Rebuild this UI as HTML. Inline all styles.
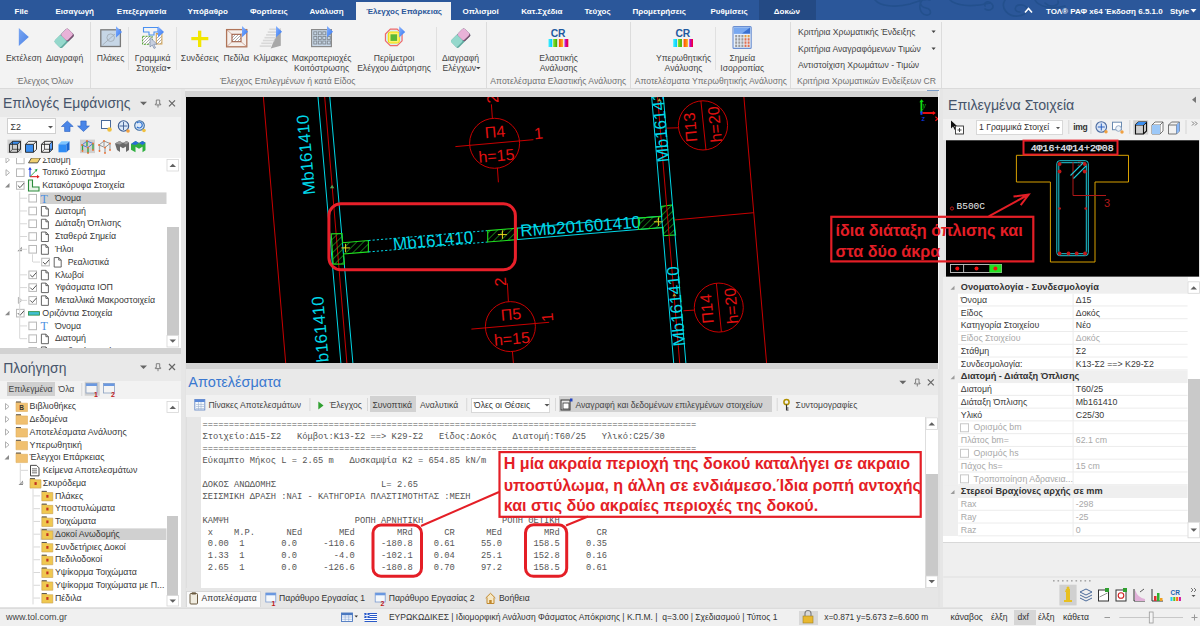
<!DOCTYPE html>
<html><head><meta charset="utf-8"><style>
html,body{margin:0;padding:0;width:1200px;height:626px;overflow:hidden;background:#e3e3e3;font-family:"Liberation Sans",sans-serif}
.t{position:absolute;white-space:pre;line-height:1}
.r{position:absolute;display:block}
</style></head><body>
<div class="r" style="left:0px;top:0px;width:1200px;height:20px;background:#2b579a;"></div>
<svg class="r" style="left:840px;top:0px;" width="240" height="20" viewBox="0 0 240 20"><g fill="none" stroke="#23508d" stroke-width="1.6" stroke-linecap="round"><path d="M35 0 C40 6 55 8 70 4 C80 1 85 -2 90 0"/><path d="M82 0 C78 6 80 14 86 15 C92 16 92 9 86 8 C80 7 78 0 84 -2"/><path d="M110 0 C115 5 130 8 150 3"/><path d="M145 9 C150 12 155 8 152 4 C149 0 143 2 145 6"/><path d="M165 0 C160 8 168 17 178 16 C188 15 190 6 182 5 C174 4 173 12 180 12"/><path d="M195 0 C198 6 210 10 225 6"/><path d="M205 3 C210 8 220 6 218 1"/></g></svg>
<div class="r" style="left:758.75px;top:0px;width:57.5px;height:20px;background:#244a84;"></div>
<div class="r" style="left:355.5px;top:2px;width:95px;height:18px;background:#f3f3f3;"></div>
<div class="t" style="left:14.5px;top:7.8px;font-size:8px;color:#fff;font-weight:bold;font-family:'Liberation Sans';">File</div>
<div class="t" style="left:55.5px;top:7.8px;font-size:8px;color:#fff;font-weight:bold;font-family:'Liberation Sans';">Εισαγωγή</div>
<div class="t" style="left:116.8px;top:7.8px;font-size:8px;color:#fff;font-weight:bold;font-family:'Liberation Sans';">Επεξεργασία</div>
<div class="t" style="left:187.5px;top:7.8px;font-size:8px;color:#fff;font-weight:bold;font-family:'Liberation Sans';">Υπόβαθρο</div>
<div class="t" style="left:250.0px;top:7.8px;font-size:8px;color:#fff;font-weight:bold;font-family:'Liberation Sans';">Φορτίσεις</div>
<div class="t" style="left:309.5px;top:7.8px;font-size:8px;color:#fff;font-weight:bold;font-family:'Liberation Sans';">Ανάλυση</div>
<div class="t" style="left:462.5px;top:7.8px;font-size:8px;color:#fff;font-weight:bold;font-family:'Liberation Sans';">Οπλισμοί</div>
<div class="t" style="left:521.2px;top:7.8px;font-size:8px;color:#fff;font-weight:bold;font-family:'Liberation Sans';">Κατ.Σχέδια</div>
<div class="t" style="left:584.5px;top:7.8px;font-size:8px;color:#fff;font-weight:bold;font-family:'Liberation Sans';">Τεύχος</div>
<div class="t" style="left:632.5px;top:7.8px;font-size:8px;color:#fff;font-weight:bold;font-family:'Liberation Sans';">Προμετρήσεις</div>
<div class="t" style="left:710.5px;top:7.8px;font-size:8px;color:#fff;font-weight:bold;font-family:'Liberation Sans';">Ρυθμίσεις</div>
<div class="t" style="left:773.8px;top:7.8px;font-size:8px;color:#fff;font-weight:bold;font-family:'Liberation Sans';">Δοκών</div>
<div class="t" style="left:366.2px;top:7.8px;font-size:8px;color:#2b579a;font-weight:bold;font-family:'Liberation Sans';">Έλεγχος Επάρκειας</div>
<div class="t" style="left:1046.0px;top:7.8px;font-size:8px;color:#fff;font-weight:bold;font-family:'Liberation Sans';">ΤΟΛ® ΡΑΦ x64 Έκδοση 6.5.1.0</div>
<div class="t" style="left:1170.0px;top:7.8px;font-size:8px;color:#fff;font-weight:bold;font-family:'Liberation Sans';">Style</div>
<svg class="r" style="left:1190px;top:8px;" width="8" height="6" viewBox="0 0 8 6"><path d="M0.5 1 L6.5 1 L3.5 4.5Z" fill="#fff"/></svg>
<svg class="r" style="left:1024px;top:7px;" width="9" height="7" viewBox="0 0 9 7"><path d="M1 5.5 L4.5 1.5 L8 5.5" fill="none" stroke="#fff" stroke-width="1.6"/></svg>
<div class="r" style="left:0px;top:20px;width:1200px;height:68px;background:#f3f3f3;"></div>
<div class="r" style="left:0px;top:88px;width:1200px;height:1px;background:#dadada;"></div>
<div class="r" style="left:89.5px;top:22px;width:1px;height:66px;background:#dcdcdc;"></div>
<div class="r" style="left:485.8px;top:22px;width:1px;height:66px;background:#dcdcdc;"></div>
<div class="r" style="left:630.3px;top:22px;width:1px;height:66px;background:#dcdcdc;"></div>
<div class="r" style="left:790.3px;top:22px;width:1px;height:66px;background:#dcdcdc;"></div>
<div class="r" style="left:940.8px;top:22px;width:1px;height:66px;background:#dcdcdc;"></div>
<div class="r" style="left:128.3px;top:27px;width:1px;height:43px;background:#e0e0e0;"></div>
<div class="r" style="left:175.5px;top:27px;width:1px;height:43px;background:#e0e0e0;"></div>
<div class="r" style="left:435.5px;top:27px;width:1px;height:43px;background:#e0e0e0;"></div>
<div class="r" style="left:714.7px;top:27px;width:1px;height:43px;background:#e0e0e0;"></div>
<div class="t" style="left:-126.2px;width:300px;text-align:center;top:53.9px;font-size:8.6px;color:#444;font-weight:normal;font-family:'Liberation Sans';">Εκτέλεση</div>
<div class="t" style="left:-85.4px;width:300px;text-align:center;top:53.9px;font-size:8.6px;color:#444;font-weight:normal;font-family:'Liberation Sans';">Διαγραφή</div>
<div class="t" style="left:-39.5px;width:300px;text-align:center;top:53.9px;font-size:8.6px;color:#444;font-weight:normal;font-family:'Liberation Sans';">Πλάκες</div>
<div class="t" style="left:2.6px;width:300px;text-align:center;top:53.9px;font-size:8.6px;color:#444;font-weight:normal;font-family:'Liberation Sans';">Γραμμικά</div>
<div class="t" style="left:2.6px;width:300px;text-align:center;top:63.7px;font-size:8.6px;color:#444;font-weight:normal;font-family:'Liberation Sans';">Στοιχεία </div>
<div class="t" style="left:49.9px;width:300px;text-align:center;top:53.9px;font-size:8.6px;color:#444;font-weight:normal;font-family:'Liberation Sans';">Συνδέσεις</div>
<div class="t" style="left:86.4px;width:300px;text-align:center;top:53.9px;font-size:8.6px;color:#444;font-weight:normal;font-family:'Liberation Sans';">Πεδίλα</div>
<div class="t" style="left:120.6px;width:300px;text-align:center;top:53.9px;font-size:8.6px;color:#444;font-weight:normal;font-family:'Liberation Sans';">Κλίμακες</div>
<div class="t" style="left:171.6px;width:300px;text-align:center;top:53.9px;font-size:8.6px;color:#444;font-weight:normal;font-family:'Liberation Sans';">Μακροπεριοχές</div>
<div class="t" style="left:171.6px;width:300px;text-align:center;top:63.7px;font-size:8.6px;color:#444;font-weight:normal;font-family:'Liberation Sans';">Κοιτόστρωσης</div>
<div class="t" style="left:244.0px;width:300px;text-align:center;top:53.9px;font-size:8.6px;color:#444;font-weight:normal;font-family:'Liberation Sans';">Περίμετροι</div>
<div class="t" style="left:244.0px;width:300px;text-align:center;top:63.7px;font-size:8.6px;color:#444;font-weight:normal;font-family:'Liberation Sans';">Ελέγχου Διάτρησης</div>
<div class="t" style="left:310.5px;width:300px;text-align:center;top:53.9px;font-size:8.6px;color:#444;font-weight:normal;font-family:'Liberation Sans';">Διαγραφή</div>
<div class="t" style="left:310.5px;width:300px;text-align:center;top:63.7px;font-size:8.6px;color:#444;font-weight:normal;font-family:'Liberation Sans';">Ελέγχων </div>
<div class="t" style="left:408.6px;width:300px;text-align:center;top:53.9px;font-size:8.6px;color:#444;font-weight:normal;font-family:'Liberation Sans';">Ελαστικής</div>
<div class="t" style="left:408.6px;width:300px;text-align:center;top:63.7px;font-size:8.6px;color:#444;font-weight:normal;font-family:'Liberation Sans';">Ανάλυσης</div>
<div class="t" style="left:533.5px;width:300px;text-align:center;top:53.9px;font-size:8.6px;color:#444;font-weight:normal;font-family:'Liberation Sans';">Υπερωθητικής</div>
<div class="t" style="left:533.5px;width:300px;text-align:center;top:63.7px;font-size:8.6px;color:#444;font-weight:normal;font-family:'Liberation Sans';">Ανάλυσης</div>
<div class="t" style="left:592.3px;width:300px;text-align:center;top:53.9px;font-size:8.6px;color:#444;font-weight:normal;font-family:'Liberation Sans';">Σημεία</div>
<div class="t" style="left:592.3px;width:300px;text-align:center;top:63.7px;font-size:8.6px;color:#444;font-weight:normal;font-family:'Liberation Sans';">Ισορροπίας</div>
<div class="t" style="left:-105.0px;width:300px;text-align:center;top:76.9px;font-size:8.6px;color:#707070;font-weight:normal;font-family:'Liberation Sans';">Έλεγχος Όλων</div>
<div class="t" style="left:137.7px;width:300px;text-align:center;top:76.9px;font-size:8.6px;color:#707070;font-weight:normal;font-family:'Liberation Sans';">Έλεγχος Επιλεγμένων ή κατά Είδος</div>
<div class="t" style="left:408.3px;width:300px;text-align:center;top:76.9px;font-size:8.6px;color:#707070;font-weight:normal;font-family:'Liberation Sans';">Αποτελέσματα Ελαστικής Ανάλυσης</div>
<div class="t" style="left:560.8px;width:300px;text-align:center;top:76.9px;font-size:8.6px;color:#707070;font-weight:normal;font-family:'Liberation Sans';">Αποτελέσματα Υπερωθητικής Ανάλυσης</div>
<div class="t" style="left:797.0px;top:76.9px;font-size:8.6px;color:#707070;font-weight:normal;font-family:'Liberation Sans';">Κριτήρια Χρωματικών Ενδείξεων CR</div>
<div class="t" style="left:798.0px;top:27.9px;font-size:8.6px;color:#444;font-weight:normal;font-family:'Liberation Sans';">Κριτήρια Χρωματικής Ένδειξης</div>
<div class="t" style="left:798.0px;top:44.6px;font-size:8.6px;color:#444;font-weight:normal;font-family:'Liberation Sans';">Κριτήρια Αναγραφόμενων Τιμών</div>
<div class="t" style="left:798.0px;top:61.2px;font-size:8.6px;color:#444;font-weight:normal;font-family:'Liberation Sans';">Αντιστοίχιση Χρωμάτων - Τιμών</div>
<svg class="r" style="left:931px;top:30px;" width="6" height="4" viewBox="0 0 6 4"><path d="M0.5 0.5 L4.7 0.5 L2.6 3Z" fill="#444"/></svg>
<svg class="r" style="left:931px;top:46.5px;" width="6" height="4" viewBox="0 0 6 4"><path d="M0.5 0.5 L4.7 0.5 L2.6 3Z" fill="#444"/></svg>
<svg class="r" style="left:0px;top:0px;" width="800" height="90" viewBox="0 0 800 90"><path d="M166.5 67 h4.6 l-2.3 2.3z" fill="#444"/><path d="M476 67 h4.6 l-2.3 2.3z" fill="#444"/></svg>
<div class="r" style="left:0px;top:89px;width:1200px;height:518px;background:#e3e3e3;"></div>
<div class="r" style="left:0px;top:89px;width:181px;height:28px;background:#e9e9e9;"></div>
<div class="t" style="left:3.0px;top:97.0px;font-size:13.9px;color:#46546a;font-weight:normal;font-family:'Liberation Sans';">Επιλογές Εμφάνισης</div>
<svg class="r" style="left:0px;top:89px;" width="182" height="30" viewBox="0 0 182 30"><path d="M140 12.799999999999997 L147 12.799999999999997 L143.5 16.299999999999997Z" fill="#666"/><path d="M156.3 10.999999999999996 h3.4 v4 h1 v0.9 h-5.4 v-0.9 h1z M158 15.899999999999997 v2.6" fill="none" stroke="#777" stroke-width="0.9"/><path d="M169 11.299999999999997 L175 17.299999999999997 M175 11.299999999999997 L169 17.299999999999997" stroke="#666" stroke-width="1.2"/></svg>
<div class="r" style="left:0px;top:117px;width:181px;height:40.5px;background:#f2f2f2;"></div>
<div class="r" style="left:7.4px;top:118.4px;width:49px;height:15.8px;background:#fff;border:1px solid #d0d0d0;box-sizing:border-box"></div>
<div class="t" style="left:10.5px;top:122.6px;font-size:8.8px;color:#333;font-weight:normal;font-family:'Liberation Sans';">Σ2</div>
<svg class="r" style="left:0px;top:0px;" width="182" height="160" viewBox="0 0 182 160"><path d="M48 126 h5 l-2.5 2.5z" fill="#555"/><path d="M67.3 121 L73.2 126.5 H70 V131.5 H64.6 V126.5 H61.4Z" fill="#4a86e8" stroke="#2a60c0" stroke-width="0.6"/><path d="M83.5 131.5 L89.4 126 H86.2 V121 H80.8 V126 H77.6Z" fill="#4a86e8" stroke="#2a60c0" stroke-width="0.6"/><rect x="101.5" y="120.5" width="9" height="8" fill="#fff" stroke="#4a6a9a" stroke-width="1"/><circle cx="109.5" cy="129.5" r="2.3" fill="#f0c040"/><circle cx="123.5" cy="126" r="5.2" fill="#dbe8f8" stroke="#3a5a90" stroke-width="1.1"/><path d="M123.5 122 v8 M119.5 126 h8" stroke="#3a5a90" stroke-width="0.9"/><circle cx="128" cy="131" r="1.8" fill="#f0a040"/><circle cx="139.5" cy="125.5" r="4.8" fill="#dbe8f8" stroke="#3a6aa0" stroke-width="1.1"/><path d="M137 123 a3 3 0 1 1 0 4" fill="none" stroke="#2a70d0" stroke-width="1.2"/><circle cx="144" cy="130.5" r="1.8" fill="#f0c040"/><rect x="7.4" y="139.6" width="14.2" height="13.5" fill="#cfcfcf"/><path d="M9.5 144.3 l3 -3 h8 l-3 3z" fill="#3a8ef0"/><path d="M9.5 144.3 h8 v8 h-8z M9.5 144.3 l3 -3 h8 l-3 3 M17.5 152.3 l3 -3 v-8" fill="none" stroke="#222" stroke-width="0.9"/><path d="M12.5 141.3 v8 h8 M12.5 149.3 l-3 3" fill="none" stroke="#222" stroke-width="0.7"/><rect x="25.5" y="144.3" width="8" height="8" fill="#3a8ef0"/><path d="M25.5 144.3 h8 v8 h-8z M25.5 144.3 l3 -3 h8 l-3 3 M33.5 152.3 l3 -3 v-8" fill="none" stroke="#222" stroke-width="0.9"/><path d="M49.5 144.3 l3 -3 v8 l-3 3z" fill="#5a9ef8"/><path d="M41.5 144.3 h8 v8 h-8z M41.5 144.3 l3 -3 h8 l-3 3 M49.5 152.3 l3 -3 v-8" fill="none" stroke="#222" stroke-width="0.9"/><path d="M44.5 141.3 v8 h8 M44.5 149.3 l-3 3" fill="none" stroke="#222" stroke-width="0.7"/><path d="M58.5 144.3 l3 -3 h8 l-3 3z" fill="#7cc4ff"/><rect x="58.5" y="144.3" width="8" height="8" fill="#2f8cf4"/><path d="M66.5 144.3 l3 -3 v8 l-3 3z" fill="#1a66d0"/><rect x="80" y="139.6" width="15" height="13.5" fill="#cfcfcf"/><path d="M82 145 l5 -4 l6 2.5 M82 145 l6 2.5 l5 -4" fill="none" stroke="#3a70e0" stroke-width="0.9"/><path d="M82.5 145 v6 M88 147.5 v5.5 M93 143.5 v6.5 M87 141 v5" fill="none" stroke="#30a040" stroke-width="1.3"/><circle cx="82" cy="145" r="0.9" fill="#f07030"/><circle cx="87" cy="141" r="0.9" fill="#f07030"/><circle cx="93" cy="143.5" r="0.9" fill="#f07030"/><circle cx="88" cy="147.5" r="0.9" fill="#f07030"/><circle cx="82.5" cy="151" r="0.9" fill="#f07030"/><circle cx="88" cy="153" r="0.9" fill="#f07030"/><circle cx="93" cy="150" r="0.9" fill="#f07030"/><path d="M99 145 l5 -4 l6 2.5 M99 145 l6 2.5 l5 -4" fill="none" stroke="#888" stroke-width="0.9"/><path d="M99.5 145 v6 M105 147.5 v5.5 M110 143.5 v6.5 M104 141 v5" fill="none" stroke="#aaa" stroke-width="1.3"/><circle cx="99" cy="145" r="0.9" fill="#f07030"/><circle cx="104" cy="141" r="0.9" fill="#f07030"/><circle cx="110" cy="143.5" r="0.9" fill="#f07030"/><circle cx="105" cy="147.5" r="0.9" fill="#f07030"/><circle cx="99.5" cy="151" r="0.9" fill="#f07030"/><circle cx="105" cy="153" r="0.9" fill="#f07030"/><circle cx="110" cy="150" r="0.9" fill="#f07030"/><path d="M115 143.5 l4.5 -2.5 l3.5 2 l3.5 -2 l2.5 1.5 v7.5 l-3 2 v-5.5 l-3 1.8 l-3 -1.8 v5.5 l-3 -2z" fill="#6a6a6a"/><path d="M115 143.5 l4.5 -2.5 l3.5 2 l3.5 -2 l2.5 1.5 l-3 2 l-3 -1.8 l-3 1.8z" fill="#9a9a9a"/><path d="M131 144 l4.5 -3 l3.5 2 l3.5 -2 l3 1.8 v7.5 l-3 2 v-5.5 l-3.5 2 l-3.5 -2 v5.5 l-4.5 -2.5z" fill="#30b040"/><path d="M131 144 l4.5 -3 l3.5 2 l3.5 -2 l3 1.8 l-3 2.2 l-3.5 -2 l-3.5 2z" fill="#2a6ad8"/></svg>
<div class="r" style="left:0px;top:157.5px;width:166.5px;height:190px;background:#fff;"></div>
<div class="r" style="left:166.5px;top:157.5px;width:14px;height:190px;background:#fff;"></div>
<div class="r" style="left:166.5px;top:227px;width:12.5px;height:108px;background:#c9c9c9;"></div>
<svg class="r" style="left:0px;top:0px;" width="182" height="350" viewBox="0 0 182 350"><rect x="167" y="159.5" width="11.5" height="11.5" fill="#fff" stroke="#d6d6d6" stroke-width="0.8"/><path d="M169.5 167 h6.5 l-3.25 -3.3z" fill="#606060"/><rect x="167" y="335.5" width="11.5" height="11.5" fill="#fff" stroke="#d6d6d6" stroke-width="0.8"/><path d="M169.5 339.5 h6.5 l-3.25 3.3z" fill="#606060"/></svg>
<div class="r" style="left:0;top:157.5px;width:166.5px;height:190px;overflow:hidden"><svg width="167" height="350" style="position:absolute;left:0;top:-157.5px" viewBox="0 0 167 350"><rect x="16.5" y="156.1" width="7.6" height="7.6" fill="#fff" stroke="#b8b8b8" stroke-width="1"/><path d="M6.0 156.9 L9.5 159.9 L6.0 162.9Z" fill="none" stroke="#a8a8a8" stroke-width="0.9"/><path d="M28.5 162.9 l3 -5 h9 l-3 5z" fill="#f0d070" stroke="#333" stroke-width="0.8"/><rect x="16.5" y="168.87" width="7.6" height="7.6" fill="#fff" stroke="#b8b8b8" stroke-width="1"/><path d="M6.0 169.67000000000002 L9.5 172.67000000000002 L6.0 175.67000000000002Z" fill="none" stroke="#a8a8a8" stroke-width="0.9"/><path d="M30.0 176.67000000000002 v-8" stroke="#2040e0" stroke-width="1.1"/><path d="M28.2 169.67000000000002 l1.8 -2.6 l1.8 2.6z" fill="#2040e0"/><path d="M30.0 176.67000000000002 h8" stroke="#e02020" stroke-width="1.1"/><path d="M37.0 174.87 l2.6 1.8 l-2.6 1.8z" fill="#e02020"/><path d="M30.0 176.67000000000002 l6 -6" stroke="#20a040" stroke-width="0.9"/><path d="M34.5 169.67000000000002 l3 -0.8 l-0.8 3z" fill="#20a040"/><rect x="16.5" y="181.64" width="7.6" height="7.6" fill="#fff" stroke="#b8b8b8" stroke-width="1"/><path d="M17.8 185.44 l2.2 2.2 l4 -4.5" fill="none" stroke="#555" stroke-width="1"/><path d="M9.5 182.94 L9.5 187.44 L5.0 187.44Z" fill="#8a8a8a"/><path d="M28.5 179.94 h4 v7 h6.5 v4 h-10.5z" fill="#e8f4e8" stroke="#2a8a3a" stroke-width="1.1"/><rect x="40" y="192.41" width="126.5" height="11.6" fill="#d0d0d0"/><rect x="28.9" y="194.41" width="7.6" height="7.6" fill="#fff" stroke="#b8b8b8" stroke-width="1"/><text x="40.4" y="202.71" font-family="Liberation Serif" font-size="12" fill="#4a8ee0">T</text><rect x="28.9" y="207.18" width="7.6" height="7.6" fill="#fff" stroke="#b8b8b8" stroke-width="1"/><path d="M41.4 206.48000000000002 h4.5 l2.5 2.5 v7 h-7z M45.9 206.48000000000002 v2.5 h2.5" fill="#fff" stroke="#555" stroke-width="0.9"/><rect x="28.9" y="219.95" width="7.6" height="7.6" fill="#fff" stroke="#b8b8b8" stroke-width="1"/><path d="M41.4 219.25 h4.5 l2.5 2.5 v7 h-7z M45.9 219.25 v2.5 h2.5" fill="#fff" stroke="#555" stroke-width="0.9"/><rect x="28.9" y="232.72" width="7.6" height="7.6" fill="#fff" stroke="#b8b8b8" stroke-width="1"/><path d="M41.4 232.02 h4.5 l2.5 2.5 v7 h-7z M45.9 232.02 v2.5 h2.5" fill="#fff" stroke="#555" stroke-width="0.9"/><rect x="28.9" y="245.49" width="7.6" height="7.6" fill="#fff" stroke="#b8b8b8" stroke-width="1"/><path d="M21.9 246.79000000000002 L21.9 251.29000000000002 L17.4 251.29000000000002Z" fill="#8a8a8a"/><path d="M41.4 244.79000000000002 h4.5 l2.5 2.5 v7 h-7z M45.9 244.79000000000002 v2.5 h2.5" fill="#fff" stroke="#555" stroke-width="0.9"/><rect x="41.7" y="258.26" width="7.6" height="7.6" fill="#fff" stroke="#b8b8b8" stroke-width="1"/><path d="M43.0 262.06 l2.2 2.2 l4 -4.5" fill="none" stroke="#555" stroke-width="1"/><path d="M54.2 257.56 h4.5 l2.5 2.5 v7 h-7z M58.7 257.56 v2.5 h2.5" fill="#fff" stroke="#555" stroke-width="0.9"/><rect x="28.9" y="271.03" width="7.6" height="7.6" fill="#fff" stroke="#b8b8b8" stroke-width="1"/><path d="M30.2 274.83 l2.2 2.2 l4 -4.5" fill="none" stroke="#555" stroke-width="1"/><path d="M41.4 270.33 h4.5 l2.5 2.5 v7 h-7z M45.9 270.33 v2.5 h2.5" fill="#fff" stroke="#555" stroke-width="0.9"/><rect x="28.9" y="283.8" width="7.6" height="7.6" fill="#fff" stroke="#b8b8b8" stroke-width="1"/><path d="M30.2 287.6 l2.2 2.2 l4 -4.5" fill="none" stroke="#555" stroke-width="1"/><path d="M41.4 283.1 h4.5 l2.5 2.5 v7 h-7z M45.9 283.1 v2.5 h2.5" fill="#fff" stroke="#555" stroke-width="0.9"/><rect x="28.9" y="296.57" width="7.6" height="7.6" fill="#fff" stroke="#b8b8b8" stroke-width="1"/><path d="M30.2 300.37 l2.2 2.2 l4 -4.5" fill="none" stroke="#555" stroke-width="1"/><path d="M18.4 297.37 L21.9 300.37 L18.4 303.37Z" fill="none" stroke="#a8a8a8" stroke-width="0.9"/><path d="M41.4 295.87 h4.5 l2.5 2.5 v7 h-7z M45.9 295.87 v2.5 h2.5" fill="#fff" stroke="#555" stroke-width="0.9"/><rect x="16.5" y="309.34" width="7.6" height="7.6" fill="#fff" stroke="#b8b8b8" stroke-width="1"/><path d="M17.8 313.14 l2.2 2.2 l4 -4.5" fill="none" stroke="#555" stroke-width="1"/><path d="M9.5 310.64 L9.5 315.14 L5.0 315.14Z" fill="#8a8a8a"/><rect x="28.5" y="311.64" width="11" height="3.5" fill="#40c0d0" stroke="#2a8a3a" stroke-width="0.8"/><rect x="28.9" y="322.10999999999996" width="7.6" height="7.6" fill="#fff" stroke="#b8b8b8" stroke-width="1"/><text x="40.4" y="330.40999999999997" font-family="Liberation Serif" font-size="12" fill="#4a8ee0">T</text><rect x="28.9" y="334.88" width="7.6" height="7.6" fill="#fff" stroke="#b8b8b8" stroke-width="1"/><path d="M41.4 334.18 h4.5 l2.5 2.5 v7 h-7z M45.9 334.18 v2.5 h2.5" fill="#fff" stroke="#555" stroke-width="0.9"/><rect x="28.9" y="347.65" width="7.6" height="7.6" fill="#fff" stroke="#b8b8b8" stroke-width="1"/><path d="M41.4 346.95 h4.5 l2.5 2.5 v7 h-7z M45.9 346.95 v2.5 h2.5" fill="#fff" stroke="#555" stroke-width="0.9"/><path d="M19.7 191.44 V338.68 M32.5 254.29000000000002 V262.06" stroke="#d8d8d8" stroke-width="1" fill="none"/><path d="M20 198.21 H27" stroke="#d8d8d8" stroke-width="1"/><path d="M20 210.98000000000002 H27" stroke="#d8d8d8" stroke-width="1"/><path d="M20 223.75 H27" stroke="#d8d8d8" stroke-width="1"/><path d="M20 236.52 H27" stroke="#d8d8d8" stroke-width="1"/><path d="M20 249.29000000000002 H27" stroke="#d8d8d8" stroke-width="1"/><path d="M33 262.06 H40" stroke="#d8d8d8" stroke-width="1"/><path d="M20 274.83 H27" stroke="#d8d8d8" stroke-width="1"/><path d="M20 287.6 H27" stroke="#d8d8d8" stroke-width="1"/><path d="M20 300.37 H27" stroke="#d8d8d8" stroke-width="1"/><path d="M20 325.90999999999997 H27" stroke="#d8d8d8" stroke-width="1"/><path d="M20 338.68 H27" stroke="#d8d8d8" stroke-width="1"/><path d="M20 351.45 H27" stroke="#d8d8d8" stroke-width="1"/></svg></div>
<div class="r" style="left:0;top:157.5px;width:166.5px;height:190px;overflow:hidden"><div class="t" style="left:42.3px;top:-1.9px;font-size:8.8px;color:#383838;font-weight:normal;font-family:'Liberation Sans';">Στάθμη</div><div class="t" style="left:42.3px;top:10.8px;font-size:8.8px;color:#383838;font-weight:normal;font-family:'Liberation Sans';">Τοπικό Σύστημα</div><div class="t" style="left:42.3px;top:23.6px;font-size:8.8px;color:#383838;font-weight:normal;font-family:'Liberation Sans';">Κατακόρυφα Στοιχεία</div><div class="t" style="left:54.9px;top:36.4px;font-size:8.8px;color:#383838;font-weight:normal;font-family:'Liberation Sans';">Όνομα</div><div class="t" style="left:54.9px;top:49.1px;font-size:8.8px;color:#383838;font-weight:normal;font-family:'Liberation Sans';">Διατομή</div><div class="t" style="left:54.9px;top:61.9px;font-size:8.8px;color:#383838;font-weight:normal;font-family:'Liberation Sans';">Διάταξη Όπλισης</div><div class="t" style="left:54.9px;top:74.7px;font-size:8.8px;color:#383838;font-weight:normal;font-family:'Liberation Sans';">Σταθερά Σημεία</div><div class="t" style="left:54.9px;top:87.4px;font-size:8.8px;color:#383838;font-weight:normal;font-family:'Liberation Sans';">Ήλοι</div><div class="t" style="left:67.7px;top:100.2px;font-size:8.8px;color:#383838;font-weight:normal;font-family:'Liberation Sans';">Ρεαλιστικά</div><div class="t" style="left:54.9px;top:113.0px;font-size:8.8px;color:#383838;font-weight:normal;font-family:'Liberation Sans';">Κλωβοί</div><div class="t" style="left:54.9px;top:125.8px;font-size:8.8px;color:#383838;font-weight:normal;font-family:'Liberation Sans';">Υφάσματα ΙΟΠ</div><div class="t" style="left:54.9px;top:138.5px;font-size:8.8px;color:#383838;font-weight:normal;font-family:'Liberation Sans';">Μεταλλικά Μακροστοιχεία</div><div class="t" style="left:42.3px;top:151.3px;font-size:8.8px;color:#383838;font-weight:normal;font-family:'Liberation Sans';">Οριζόντια Στοιχεία</div><div class="t" style="left:54.9px;top:164.1px;font-size:8.8px;color:#383838;font-weight:normal;font-family:'Liberation Sans';">Όνομα</div><div class="t" style="left:54.9px;top:176.8px;font-size:8.8px;color:#383838;font-weight:normal;font-family:'Liberation Sans';">Διατομή</div><div class="t" style="left:54.9px;top:189.6px;font-size:8.8px;color:#383838;font-weight:normal;font-family:'Liberation Sans';">Σταθερά Σημεία</div></div>
<div class="r" style="left:0px;top:347.5px;width:181px;height:6px;background:#d2d2d2;"></div>
<div class="r" style="left:0px;top:353.5px;width:181px;height:27px;background:#e9e9e9;"></div>
<div class="t" style="left:3.2px;top:362.2px;font-size:13.9px;color:#46546a;font-weight:normal;font-family:'Liberation Sans';">Πλοήγηση</div>
<svg class="r" style="left:0px;top:0px;" width="182" height="400" viewBox="0 0 182 400"><path d="M140 365.5 L147 365.5 L143.5 369.0Z" fill="#666"/><path d="M156.3 363.7 h3.4 v4 h1 v0.9 h-5.4 v-0.9 h1z M158 368.6 v2.6" fill="none" stroke="#777" stroke-width="0.9"/><path d="M169 364.0 L175 370.0 M175 364.0 L169 370.0" stroke="#666" stroke-width="1.2"/></svg>
<div class="r" style="left:0px;top:380.5px;width:181px;height:18px;background:#f2f2f2;"></div>
<div class="r" style="left:6.7px;top:381.7px;width:48px;height:14px;background:#d0d0d0;"></div>
<div class="t" style="left:8.5px;top:384.7px;font-size:8.6px;color:#444;font-weight:normal;font-family:'Liberation Sans';">Επιλεγμένα</div>
<div class="t" style="left:58.5px;top:384.7px;font-size:8.6px;color:#444;font-weight:normal;font-family:'Liberation Sans';">Όλα</div>
<svg class="r" style="left:0px;top:0px;" width="182" height="400" viewBox="0 0 182 400"><rect x="81.3" y="383" width="1" height="13" fill="#d8d8d8"/><rect x="84.7" y="381.7" width="15" height="14" fill="#d0d0d0"/><rect x="86" y="383.5" width="11" height="9.5" fill="#f4f4f4" stroke="#8aa0c0" stroke-width="0.8"/><rect x="86" y="383.5" width="11" height="2.5" fill="#6a98e0"/><text x="94" y="396.5" font-family="Liberation Sans" font-weight="bold" font-size="7" fill="#c02020">1</text><rect x="103.5" y="383.5" width="11" height="9.5" fill="#f4f4f4" stroke="#8aa0c0" stroke-width="0.8"/><rect x="103.5" y="383.5" width="11" height="2.5" fill="#6a98e0"/><text x="111" y="396.5" font-family="Liberation Sans" font-weight="bold" font-size="7" fill="#c02020">2</text></svg>
<div class="r" style="left:0px;top:398.5px;width:166.5px;height:208px;background:#fff;"></div>
<div class="r" style="left:166.5px;top:398.5px;width:14px;height:208px;background:#fff;"></div>
<div class="r" style="left:166.8px;top:516px;width:11.7px;height:80px;background:#c9c9c9;"></div>
<svg class="r" style="left:0px;top:0px;" width="182" height="610" viewBox="0 0 182 610"><rect x="167" y="401.5" width="11.5" height="11" fill="#fff" stroke="#d6d6d6" stroke-width="0.8"/><path d="M169.5 409 h6.5 l-3.25 -3.3z" fill="#606060"/><rect x="167" y="595.5" width="11.5" height="10.5" fill="#fff" stroke="#d6d6d6" stroke-width="0.8"/><path d="M169.5 599.5 h6.5 l-3.25 3.3z" fill="#606060"/></svg>
<div class="r" style="left:0;top:398.5px;width:166.5px;height:208px;overflow:hidden"><svg width="167" height="610" style="position:absolute;left:0;top:-398.5px" viewBox="0 0 167 610"><path d="M5.5 403.5 L9 406.5 L5.5 409.5Z" fill="none" stroke="#a8a8a8" stroke-width="0.9"/><path d="M16 402.0 h4.5 l1 1.2 h6.0 v8.3 h-11.5z" fill="#f0c070" stroke="#e0b060" stroke-width="0.6"/><rect x="16" y="401.5" width="5" height="1" fill="#555"/><text x="19.3" y="409.8" font-family="Liberation Sans" font-weight="bold" font-size="6.5" fill="#333">B</text><path d="M5.5 416.27 L9 419.27 L5.5 422.27Z" fill="none" stroke="#a8a8a8" stroke-width="0.9"/><path d="M16 414.77 h4.5 l1 1.2 h6.0 v8.3 h-11.5z" fill="#f0c070" stroke="#e0b060" stroke-width="0.6"/><rect x="16" y="414.27" width="5" height="1" fill="#555"/><path d="M5.5 429.04 L9 432.04 L5.5 435.04Z" fill="none" stroke="#a8a8a8" stroke-width="0.9"/><path d="M16 427.54 h4.5 l1 1.2 h6.0 v8.3 h-11.5z" fill="#f0c070" stroke="#e0b060" stroke-width="0.6"/><rect x="16" y="427.04" width="5" height="1" fill="#555"/><path d="M5.5 441.81 L9 444.81 L5.5 447.81Z" fill="none" stroke="#a8a8a8" stroke-width="0.9"/><path d="M16 440.31 h4.5 l1 1.2 h6.0 v8.3 h-11.5z" fill="#f0c070" stroke="#e0b060" stroke-width="0.6"/><rect x="16" y="439.81" width="5" height="1" fill="#555"/><path d="M9 455.08 L9 459.58 L4.5 459.58Z" fill="#8a8a8a"/><path d="M16 453.08 h4.5 l1 1.2 h6.0 v8.3 h-11.5z" fill="#f0c070" stroke="#e0b060" stroke-width="0.6"/><rect x="16" y="452.58" width="5" height="1" fill="#555"/><path d="M30.5 465.35 h6 l2.5 2.5 v8 h-8.5z" fill="#fff" stroke="#333" stroke-width="0.9"/><path d="M32 468.85 h5 M32 470.85 h5 M32 472.85 h5" stroke="#333" stroke-width="0.7"/><path d="M23 480.62 L23 485.12 L18.5 485.12Z" fill="#8a8a8a"/><path d="M30 478.62 h4.5 l1 1.2 h5.5 v8.3 h-11z" fill="#f0c850" stroke="#c8a050" stroke-width="0.6"/><rect x="30" y="478.12" width="5" height="1" fill="#555"/><rect x="34.5" y="482.12" width="2.2" height="2.8" fill="#c03020"/><path d="M41.8 491.39 h4.5 l1 1.2 h5.5 v8.3 h-11z" fill="#f0c850" stroke="#c8a050" stroke-width="0.6"/><rect x="41.8" y="490.89" width="5" height="1" fill="#555"/><rect x="46.3" y="494.89" width="2.2" height="2.8" fill="#c03020"/><path d="M41.8 504.15999999999997 h4.5 l1 1.2 h5.5 v8.3 h-11z" fill="#f0c850" stroke="#c8a050" stroke-width="0.6"/><rect x="41.8" y="503.65999999999997" width="5" height="1" fill="#555"/><rect x="46.3" y="507.65999999999997" width="2.2" height="2.8" fill="#c03020"/><path d="M41.8 516.93 h4.5 l1 1.2 h5.5 v8.3 h-11z" fill="#f0c850" stroke="#c8a050" stroke-width="0.6"/><rect x="41.8" y="516.43" width="5" height="1" fill="#555"/><rect x="46.3" y="520.43" width="2.2" height="2.8" fill="#c03020"/><rect x="40.5" y="528.4000000000001" width="126" height="11.6" fill="#d0d0d0"/><path d="M41.8 529.7 h4.5 l1 1.2 h5.5 v8.3 h-11z" fill="#f0c850" stroke="#c8a050" stroke-width="0.6"/><rect x="41.8" y="529.2" width="5" height="1" fill="#555"/><rect x="46.3" y="533.2" width="2.2" height="2.8" fill="#c03020"/><path d="M41.8 542.47 h4.5 l1 1.2 h5.5 v8.3 h-11z" fill="#f0c850" stroke="#c8a050" stroke-width="0.6"/><rect x="41.8" y="541.97" width="5" height="1" fill="#555"/><rect x="46.3" y="545.97" width="2.2" height="2.8" fill="#c03020"/><path d="M41.8 555.24 h4.5 l1 1.2 h5.5 v8.3 h-11z" fill="#f0c850" stroke="#c8a050" stroke-width="0.6"/><rect x="41.8" y="554.74" width="5" height="1" fill="#555"/><rect x="46.3" y="558.74" width="2.2" height="2.8" fill="#c03020"/><path d="M41.8 568.01 h4.5 l1 1.2 h5.5 v8.3 h-11z" fill="#f0c850" stroke="#c8a050" stroke-width="0.6"/><rect x="41.8" y="567.51" width="5" height="1" fill="#555"/><rect x="46.3" y="571.51" width="2.2" height="2.8" fill="#c03020"/><path d="M41.8 580.78 h4.5 l1 1.2 h5.5 v8.3 h-11z" fill="#f0c850" stroke="#c8a050" stroke-width="0.6"/><rect x="41.8" y="580.28" width="5" height="1" fill="#555"/><rect x="46.3" y="584.28" width="2.2" height="2.8" fill="#c03020"/><path d="M41.8 593.55 h4.5 l1 1.2 h5.5 v8.3 h-11z" fill="#f0c850" stroke="#c8a050" stroke-width="0.6"/><rect x="41.8" y="593.05" width="5" height="1" fill="#555"/><rect x="46.3" y="597.05" width="2.2" height="2.8" fill="#c03020"/><path d="M20.3 463.58 V483.12 M33 489.12 V604.435" stroke="#d8d8d8" stroke-width="1" fill="none"/><path d="M20.8 470.35 H28" stroke="#d8d8d8" stroke-width="1"/><path d="M20.8 483.12 H24" stroke="#d8d8d8" stroke-width="1"/><path d="M33.5 495.89 H40" stroke="#d8d8d8" stroke-width="1"/><path d="M33.5 508.65999999999997 H40" stroke="#d8d8d8" stroke-width="1"/><path d="M33.5 521.43 H40" stroke="#d8d8d8" stroke-width="1"/><path d="M33.5 534.2 H40" stroke="#d8d8d8" stroke-width="1"/><path d="M33.5 546.97 H40" stroke="#d8d8d8" stroke-width="1"/><path d="M33.5 559.74 H40" stroke="#d8d8d8" stroke-width="1"/><path d="M33.5 572.51 H40" stroke="#d8d8d8" stroke-width="1"/><path d="M33.5 585.28 H40" stroke="#d8d8d8" stroke-width="1"/><path d="M33.5 598.05 H40" stroke="#d8d8d8" stroke-width="1"/></svg><div class="t" style="left:29.6px;top:3.7px;font-size:8.8px;color:#383838;font-weight:normal;font-family:'Liberation Sans';">Βιβλιοθήκες</div><div class="t" style="left:29.6px;top:16.4px;font-size:8.8px;color:#383838;font-weight:normal;font-family:'Liberation Sans';">Δεδομένα</div><div class="t" style="left:29.6px;top:29.2px;font-size:8.8px;color:#383838;font-weight:normal;font-family:'Liberation Sans';">Αποτελέσματα Ανάλυσης</div><div class="t" style="left:29.6px;top:42.0px;font-size:8.8px;color:#383838;font-weight:normal;font-family:'Liberation Sans';">Υπερωθητική</div><div class="t" style="left:29.6px;top:54.7px;font-size:8.8px;color:#383838;font-weight:normal;font-family:'Liberation Sans';">Έλεγχοι Επάρκειας</div><div class="t" style="left:42.7px;top:67.5px;font-size:8.8px;color:#383838;font-weight:normal;font-family:'Liberation Sans';">Κείμενα Αποτελεσμάτων</div><div class="t" style="left:42.7px;top:80.3px;font-size:8.8px;color:#383838;font-weight:normal;font-family:'Liberation Sans';">Σκυρόδεμα</div><div class="t" style="left:55.0px;top:93.0px;font-size:8.8px;color:#383838;font-weight:normal;font-family:'Liberation Sans';">Πλάκες</div><div class="t" style="left:55.0px;top:105.8px;font-size:8.8px;color:#383838;font-weight:normal;font-family:'Liberation Sans';">Υποστυλώματα</div><div class="t" style="left:55.0px;top:118.6px;font-size:8.8px;color:#383838;font-weight:normal;font-family:'Liberation Sans';">Τοιχώματα</div><div class="t" style="left:55.0px;top:131.4px;font-size:8.8px;color:#383838;font-weight:normal;font-family:'Liberation Sans';">Δοκοί Ανωδομής</div><div class="t" style="left:55.0px;top:144.1px;font-size:8.8px;color:#383838;font-weight:normal;font-family:'Liberation Sans';">Συνδετήριες Δοκοί</div><div class="t" style="left:55.0px;top:156.9px;font-size:8.8px;color:#383838;font-weight:normal;font-family:'Liberation Sans';">Πεδιλοδοκοί</div><div class="t" style="left:55.0px;top:169.7px;font-size:8.8px;color:#383838;font-weight:normal;font-family:'Liberation Sans';">Υψίκορμα Τοιχώματα</div><div class="t" style="left:55.0px;top:182.4px;font-size:8.8px;color:#383838;font-weight:normal;font-family:'Liberation Sans';">Υψίκορμα Τοιχώματα με Π...</div><div class="t" style="left:55.0px;top:195.2px;font-size:8.8px;color:#383838;font-weight:normal;font-family:'Liberation Sans';">Πέδιλα</div></div>
<div class="r" style="left:182px;top:89px;width:761px;height:8px;background:#ececec;"></div>
<div class="r" style="left:181px;top:89px;width:3.6px;height:518px;background:#e6e6e6;"></div>
<div class="r" style="left:184.6px;top:91px;width:1px;height:272px;background:#e4e4e4;"></div>
<div class="r" style="left:184.6px;top:91px;width:753.2px;height:5.7px;background:#d3d3d3;"></div>
<div class="r" style="left:937.8px;top:91px;width:1.7px;height:278px;background:#f4f4f4;"></div>
<div class="r" style="left:939.5px;top:89px;width:3.5px;height:518px;background:#e6e6e6;"></div>
<div class="r" style="left:185.6px;top:96.7px;width:752.6px;height:266.1px;background:#000;"></div>
<div class="r" style="left:185.6px;top:362.8px;width:752.6px;height:6px;background:#d3d3d3;"></div>
<svg class="r" style="left:185.6px;top:96.7px" width="752.6" height="266.1" viewBox="185.6 96.7 752.6 266.1"><defs><pattern id="hat" width="4.8" height="4.8" patternUnits="userSpaceOnUse" patternTransform="rotate(45)"><line x1="0" y1="0" x2="0" y2="4.8" stroke="#20d020" stroke-width="1.1"/></pattern></defs><line x1="263" y1="96.7" x2="285.3" y2="362.8" stroke="#c80000" stroke-width="1" /><line x1="317.6" y1="96.7" x2="340.5" y2="362.8" stroke="#00d8e8" stroke-width="1" /><line x1="329.4" y1="96.7" x2="352.5" y2="362.8" stroke="#00d8e8" stroke-width="1" /><line x1="324.3" y1="96.7" x2="346.5" y2="362.8" stroke="#c80000" stroke-width="1" /><path d="M329.5 188 l2.2 -3.5 l2.2 3.5z" fill="#50a050"/><text x="0" y="0" transform="translate(305.8,154.5) rotate(-95)" text-anchor="middle" dominant-baseline="central" font-family="Liberation Sans" font-size="17" font-weight="normal" fill="#00d8e8">Mb161410</text><text x="0" y="0" transform="translate(320.7,336) rotate(-95)" text-anchor="middle" dominant-baseline="central" font-family="Liberation Sans" font-size="17" font-weight="normal" fill="#00d8e8">Mb161410</text><polygon points="330.8,233.6 341.6,233.2 342.3,242.4 368.0,240.2 368.0,251.6 343.2,253.7 344.0,263.6 332.8,263.8" fill="url(#hat)" stroke="#20e020" stroke-width="1.1"/><path d="M341 247.6 h8.5 M345.2 243.5 v8.5" stroke="#e8d820" stroke-width="1"/><line x1="368" y1="240.221" x2="487.3" y2="230.31910000000002" stroke="#00d8e8" stroke-width="1" stroke-dasharray="2.2 2"/><line x1="368" y1="251.62099999999998" x2="487.3" y2="241.7191" stroke="#00d8e8" stroke-width="1" stroke-dasharray="2.2 2"/><polygon points="487.3,230.3 517.0,227.9 517.0,239.3 487.3,241.7" fill="url(#hat)" stroke="#20e020" stroke-width="1.1"/><path d="M497.5 234.3 h9 M502 230 v8.5" stroke="#e8d820" stroke-width="1"/><text x="0" y="0" transform="translate(432.7,240.5) rotate(-5.2)" text-anchor="middle" dominant-baseline="central" font-family="Liberation Sans" font-size="17" font-weight="normal" fill="#00d8e8">Mb161410</text><path d="M449 238 l2 -2 l1 3z" fill="#a0a030"/><line x1="517" y1="227.854" x2="661" y2="215.90200000000002" stroke="#00d8e8" stroke-width="1" /><line x1="517" y1="239.254" x2="663" y2="227.136" stroke="#00d8e8" stroke-width="1" /><text x="0" y="0" transform="translate(580.2,226.3) rotate(-4.3)" text-anchor="middle" dominant-baseline="central" font-family="Liberation Sans" font-size="17" font-weight="normal" fill="#00d8e8">RMb201601410</text><polygon points="638.0,217.8 661.5,215.9 660.8,206.2 672.0,204.6 675.2,234.6 663.2,235.4 662.8,227.2 638.0,229.2" fill="url(#hat)" stroke="#20e020" stroke-width="1.1"/><path d="M653.5 221.5 h9 M658 217 v8.5" stroke="#e8d820" stroke-width="1"/><line x1="651.3" y1="96.7" x2="673.3" y2="362.8" stroke="#00d8e8" stroke-width="1" /><line x1="663" y1="96.7" x2="685.5" y2="362.8" stroke="#00d8e8" stroke-width="1" /><line x1="657.2" y1="96.7" x2="679.3" y2="362.8" stroke="#c80000" stroke-width="1" /><text x="0" y="0" transform="translate(660,122) rotate(-95)" text-anchor="middle" dominant-baseline="central" font-family="Liberation Sans" font-size="17" font-weight="normal" fill="#00d8e8">Mb161410</text><text x="0" y="0" transform="translate(676,306) rotate(-95)" text-anchor="middle" dominant-baseline="central" font-family="Liberation Sans" font-size="17" font-weight="normal" fill="#00d8e8">Mb161410</text><path d="M657 101 l2 -3 l2 3z" fill="#a0a030"/><path d="M672 296 l2 -3 l2 3z" fill="#a0a030"/><line x1="674.5" y1="219.6" x2="753.5" y2="212.4" stroke="#c80000" stroke-width="1" /><line x1="743.5" y1="96.7" x2="766.2" y2="362.8" stroke="#c80000" stroke-width="1" /><circle cx="494.2" cy="143" r="25" fill="none" stroke="#c80000" stroke-width="1"/><line x1="455" y1="146.3" x2="533" y2="139.4" stroke="#c80000" stroke-width="1" /><line x1="492" y1="118" x2="491" y2="104" stroke="#c80000" stroke-width="1" /><line x1="497" y1="167.5" x2="498" y2="182" stroke="#c80000" stroke-width="1" /><text x="0" y="0" transform="translate(494.5,131.5) rotate(-5)" text-anchor="middle" dominant-baseline="central" font-family="Liberation Sans" font-size="16" font-weight="normal" fill="#e01010">Π4</text><text x="0" y="0" transform="translate(496,155.5) rotate(-5)" text-anchor="middle" dominant-baseline="central" font-family="Liberation Sans" font-size="16" font-weight="normal" fill="#e01010">h=15</text><text x="0" y="0" transform="translate(538,133) rotate(-5)" text-anchor="middle" dominant-baseline="central" font-family="Liberation Sans" font-size="16" font-weight="normal" fill="#e01010">1</text><text x="0" y="0" transform="translate(492.3,98.5) rotate(-95)" text-anchor="middle" dominant-baseline="central" font-family="Liberation Sans" font-size="16" font-weight="normal" fill="#e01010">2</text><circle cx="510" cy="326.3" r="25" fill="none" stroke="#c80000" stroke-width="1"/><line x1="471" y1="328.8" x2="548.8" y2="322" stroke="#c80000" stroke-width="1" /><line x1="507" y1="283" x2="508" y2="301.5" stroke="#c80000" stroke-width="1" /><line x1="512" y1="351" x2="513" y2="362.8" stroke="#c80000" stroke-width="1" /><text x="0" y="0" transform="translate(510.5,314) rotate(-5)" text-anchor="middle" dominant-baseline="central" font-family="Liberation Sans" font-size="16" font-weight="normal" fill="#e01010">Π5</text><text x="0" y="0" transform="translate(511.5,338.5) rotate(-5)" text-anchor="middle" dominant-baseline="central" font-family="Liberation Sans" font-size="16" font-weight="normal" fill="#e01010">h=15</text><text x="0" y="0" transform="translate(500,281.5) rotate(-95)" text-anchor="middle" dominant-baseline="central" font-family="Liberation Sans" font-size="16" font-weight="normal" fill="#e01010">2</text><text x="0" y="0" transform="translate(547,317) rotate(-95)" text-anchor="middle" dominant-baseline="central" font-family="Liberation Sans" font-size="16" font-weight="normal" fill="#e01010">1</text><circle cx="702.6" cy="125.1" r="24.6" fill="none" stroke="#c80000" stroke-width="1"/><line x1="700.5" y1="100.5" x2="705.6" y2="149.8" stroke="#c80000" stroke-width="1" /><line x1="666.6" y1="127.8" x2="678" y2="127.5" stroke="#c80000" stroke-width="1" /><text x="0" y="0" transform="translate(690,127) rotate(-95)" text-anchor="middle" dominant-baseline="central" font-family="Liberation Sans" font-size="16" font-weight="normal" fill="#e01010">Π13</text><text x="0" y="0" transform="translate(714.5,124) rotate(-95)" text-anchor="middle" dominant-baseline="central" font-family="Liberation Sans" font-size="16" font-weight="normal" fill="#e01010">h=20</text><circle cx="718.4" cy="307.3" r="24.5" fill="none" stroke="#c80000" stroke-width="1"/><line x1="716" y1="283" x2="721" y2="331.5" stroke="#c80000" stroke-width="1" /><line x1="683" y1="310.5" x2="694" y2="309.8" stroke="#c80000" stroke-width="1" /><text x="0" y="0" transform="translate(706.5,308.5) rotate(-95)" text-anchor="middle" dominant-baseline="central" font-family="Liberation Sans" font-size="16" font-weight="normal" fill="#e01010">Π14</text><text x="0" y="0" transform="translate(731,305.5) rotate(-95)" text-anchor="middle" dominant-baseline="central" font-family="Liberation Sans" font-size="16" font-weight="normal" fill="#e01010">h=20</text><path d="M921 112.7 v-11.5" stroke="#10e010" stroke-width="1.8"/><path d="M919 102 l2 -3 l2.4 2.4z" fill="#10e010"/><path d="M922 112.7 h11" stroke="#ff1010" stroke-width="1.8"/><path d="M932.5 110.6 l3 2.1 l-3 2.1z" fill="#ff1010"/><text x="922" y="108" font-family="Liberation Serif" font-size="7.5" font-style="italic" fill="#10d010">y</text><text x="921" y="121" font-family="Liberation Sans" font-size="7" fill="#1040ff">z</text><rect x="920" y="111" width="2" height="3.5" fill="#1040ff"/><path d="M935 116.5 l2.5 2 l-2.5 2" fill="none" stroke="#ff1010" stroke-width="1.1"/><rect x="328.5" y="203.5" width="186.5" height="66" rx="12" fill="none" stroke="#e8202a" stroke-width="3"/></svg>
<div class="r" style="left:185.6px;top:369px;width:752.6px;height:26px;background:#e9e9e9;"></div>
<div class="t" style="left:188.3px;top:374.9px;font-size:14.5px;color:#3a78d0;font-weight:normal;font-family:'Liberation Sans';">Αποτελέσματα</div>
<svg class="r" style="left:0px;top:0px;" width="940" height="400" viewBox="0 0 940 400"><path d="M899.3 380.8 L906.3 380.8 L902.8 384.3Z" fill="#666"/><path d="M915.5999999999999 379.0 h3.4 v4 h1 v0.9 h-5.4 v-0.9 h1z M917.3 383.90000000000003 v2.6" fill="none" stroke="#777" stroke-width="0.9"/><path d="M927.8 379.3 L933.8 385.3 M933.8 379.3 L927.8 385.3" stroke="#666" stroke-width="1.2"/></svg>
<div class="r" style="left:185.6px;top:395px;width:752.6px;height:21.5px;background:#f1f1f1;"></div>
<div class="r" style="left:370px;top:396.3px;width:46.3px;height:15.7px;background:#d2d2d2;"></div>
<div class="r" style="left:558.8px;top:396.3px;width:213.2px;height:15.7px;background:#d2d2d2;"></div>
<div class="r" style="left:471.3px;top:397.5px;width:79.2px;height:15px;background:#fff;border:1px solid #d8d8d8;box-sizing:border-box"></div>
<div class="t" style="left:208.4px;top:400.9px;font-size:8.6px;color:#444;font-weight:normal;font-family:'Liberation Sans';">Πίνακες Αποτελεσμάτων</div>
<div class="t" style="left:329.5px;top:400.9px;font-size:8.6px;color:#444;font-weight:normal;font-family:'Liberation Sans';">Έλεγχος</div>
<div class="t" style="left:372.5px;top:400.9px;font-size:8.6px;color:#3a3a3a;font-weight:normal;font-family:'Liberation Sans';">Συνοπτικά</div>
<div class="t" style="left:420.0px;top:400.9px;font-size:8.6px;color:#444;font-weight:normal;font-family:'Liberation Sans';">Αναλυτικά</div>
<div class="t" style="left:474.0px;top:400.9px;font-size:8.6px;color:#333;font-weight:normal;font-family:'Liberation Sans';">Όλες οι Θέσεις</div>
<div class="t" style="left:575.5px;top:400.9px;font-size:8.6px;color:#444;font-weight:normal;font-family:'Liberation Sans';">Αναγραφή και δεδομένων επιλεγμένων στοιχείων</div>
<div class="t" style="left:795.6px;top:400.9px;font-size:8.6px;color:#444;font-weight:normal;font-family:'Liberation Sans';">Συντομογραφίες</div>
<svg class="r" style="left:0px;top:0px;" width="940" height="420" viewBox="0 0 940 420"><rect x="194.8" y="399.5" width="10" height="10.5" fill="#f4f8fc" stroke="#6a8cc8" stroke-width="0.9"/><rect x="194.8" y="399.5" width="10" height="2.5" fill="#5a88d8"/><path d="M196 404.5 h8 M196 406.5 h8 M196 408.5 h8 M198.5 402 v8 M201 402 v8" stroke="#a0b4d0" stroke-width="0.6"/><path d="M318.3 401.5 L323.5 405.5 L318.3 409.5Z" fill="#30a030"/><path d="M544.5 404 h5 l-2.5 2.5z" fill="#555"/><rect x="309.4" y="398" width="1" height="13" fill="#d8d8d8"/><rect x="367" y="398" width="1" height="13" fill="#d8d8d8"/><rect x="466.2" y="398" width="1" height="13" fill="#d8d8d8"/><rect x="555" y="398" width="1" height="13" fill="#d8d8d8"/><rect x="776.7" y="398" width="1" height="13" fill="#d8d8d8"/><rect x="561" y="400" width="9" height="10" fill="#e8e8e8" stroke="#333" stroke-width="1"/><rect x="563" y="403" width="6" height="6" fill="#fff" stroke="#333" stroke-width="0.8"/><rect x="570" y="398.5" width="2.5" height="3" fill="#2040c0"/><circle cx="786.5" cy="402" r="2.6" fill="none" stroke="#b09000" stroke-width="1.5"/><path d="M786.5 404.5 v6 M786.5 408 h2 M786.5 410 h2" stroke="#333" stroke-width="1.1"/></svg>
<div class="r" style="left:185.6px;top:416.5px;width:752.6px;height:174.5px;background:#dedede;"></div>
<div class="r" style="left:187.3px;top:416.9px;width:738px;height:171.1px;background:#fff;"></div>
<div class="r" style="left:187.3px;top:416.9px;width:13.7px;height:171.1px;background:#e6e6e6;"></div>
<div class="r" style="left:925.8px;top:416.9px;width:12.2px;height:171.1px;background:#fff;"></div>
<div class="r" style="left:925.8px;top:473.8px;width:12.2px;height:102px;background:#c9c9c9;"></div>
<svg class="r" style="left:0px;top:0px;" width="940" height="600" viewBox="0 0 940 600"><rect x="926" y="417.8" width="11.6" height="11.6" fill="#fff" stroke="#d6d6d6" stroke-width="0.8"/><path d="M928.5 425.5 h6.5 l-3.25 -3.3z" fill="#606060"/><rect x="926" y="576" width="11.6" height="11.6" fill="#fff" stroke="#d6d6d6" stroke-width="0.8"/><path d="M928.5 580 h6.5 l-3.25 3.3z" fill="#606060"/></svg>
<pre class="r" style="margin:0;left:202.6px;top:419.8px;font-family:'Liberation Mono';font-size:8.75px;line-height:11.97px;color:#555">==============================================================================================
Στοιχείο:Δ15-Σ2   Κόμβοι:Κ13-Σ2 ==&gt; Κ29-Σ2   Είδος:Δοκός   Διατομή:Τ60/25   Υλικό:C25/30
==============================================================================================
Εύκαμπτο Μήκος L = 2.65 m   Δυσκαμψία K2 = 654.85 kN/m

ΔΟΚΟΣ ΑΝΩΔΟΜΗΣ                    L= 2.65
ΣΕΙΣΜΙΚΗ ΔΡΑΣΗ :ΝΑΙ - ΚΑΤΗΓΟΡΙΑ ΠΛΑΣΤΙΜΟΤΗΤΑΣ :ΜΕΣΗ

ΚΑΜΨΗ                        ΡΟΠΗ ΑΡΝΗΤΙΚΗ               ΡΟΠΗ ΘΕΤΙΚΗ
 x    M.P.      NEd       MEd        MRd      CR      MEd        MRd       CR
 0.00  1       0.0     -110.6     -180.8    0.61     55.0      158.5     0.35
 1.33  1       0.0       -4.0     -102.1    0.04     25.1      152.8     0.16
 2.65  1       0.0     -126.6     -180.8    0.70     97.2      158.5     0.61</pre>
<div class="r" style="left:185.6px;top:588px;width:752.6px;height:19px;background:#e6e6e6;"></div>
<div class="r" style="left:186px;top:590.5px;width:74.5px;height:16.5px;background:#fbfbfb;border:1px solid #d8d8d8;border-bottom:none;box-sizing:border-box"></div>
<div class="t" style="left:201.6px;top:594.3px;font-size:8.6px;color:#333;font-weight:normal;font-family:'Liberation Sans';">Αποτελέσματα</div>
<div class="t" style="left:279.0px;top:594.3px;font-size:8.6px;color:#333;font-weight:normal;font-family:'Liberation Sans';">Παράθυρο Εργασίας 1</div>
<div class="t" style="left:388.7px;top:594.3px;font-size:8.6px;color:#333;font-weight:normal;font-family:'Liberation Sans';">Παράθυρο Εργασίας 2</div>
<div class="t" style="left:498.9px;top:594.3px;font-size:8.6px;color:#333;font-weight:normal;font-family:'Liberation Sans';">Βοήθεια</div>
<svg class="r" style="left:0px;top:0px;" width="940" height="610" viewBox="0 0 940 610"><rect x="190" y="593.5" width="7.5" height="10.5" rx="1" fill="#f0ece0" stroke="#6a5a40" stroke-width="1"/><rect x="191.8" y="592.3" width="4" height="2.2" fill="#6a5a40"/><rect x="265.8" y="593" width="10" height="9" fill="#f4f8fc" stroke="#7a9ad0" stroke-width="0.8"/><rect x="265.8" y="593" width="10" height="2.3" fill="#6a98e0"/><text x="271.5" y="606" font-family="Liberation Sans" font-weight="bold" font-size="7" fill="#c01818">1</text><rect x="375.2" y="593" width="10" height="9" fill="#f4f8fc" stroke="#7a9ad0" stroke-width="0.8"/><rect x="375.2" y="593" width="10" height="2.3" fill="#6a98e0"/><text x="380.5" y="606" font-family="Liberation Sans" font-weight="bold" font-size="7" fill="#c01818">2</text><path d="M485.7 598 L490.5 593.3 L495.3 598 M487 597.5 v6 h7 v-6" fill="#f8e8c0" stroke="#c08830" stroke-width="1"/><rect x="489.2" y="600" width="2.5" height="3.5" fill="#c08830"/></svg>
<div class="r" style="left:943px;top:89px;width:0.2px;height:518px;background:#e6e6e6;"></div>
<div class="r" style="left:943.2px;top:89px;width:256.8px;height:29.5px;background:#e9e9e9;"></div>
<div class="t" style="left:948.0px;top:98.0px;font-size:14.2px;color:#46546a;font-weight:normal;font-family:'Liberation Sans';">Επιλεγμένα Στοιχεία</div>
<svg class="r" style="left:1190px;top:96px;" width="8" height="8" viewBox="0 0 8 8"><path d="M6 0.5 L2 3.8 L6 7Z" fill="#777"/></svg>
<div class="r" style="left:943.2px;top:118.5px;width:256.8px;height:21.8px;background:#f1f1f1;"></div>
<div class="r" style="left:976.4px;top:119.5px;width:86.3px;height:15.8px;background:#fff;border:1px solid #d8d8d8;box-sizing:border-box"></div>
<div class="t" style="left:979.0px;top:123.2px;font-size:8.6px;color:#333;font-weight:normal;font-family:'Liberation Sans';">1 Γραμμικά Στοιχεί</div>
<svg class="r" style="left:0px;top:0px;" width="1200" height="140" viewBox="0 0 1200 140"><path d="M1056 127 h4 l-2 2.3z" fill="#555"/><path d="M951 120.5 v8 l2 -2 l1.8 3.5 l1.2 -0.6 l-1.8 -3.4 h2.8z" fill="#111"/><rect x="955.5" y="126" width="8" height="8" fill="#fff" stroke="#333" stroke-width="0.9"/><path d="M957.5 130 h4 M959.5 128 v4" stroke="#333" stroke-width="0.9"/><rect x="1068.3" y="120" width="1" height="14" fill="#d6d6d6"/><rect x="1090.4" y="120" width="1" height="14" fill="#d6d6d6"/><rect x="1129.3" y="120" width="1" height="14" fill="#d6d6d6"/><rect x="1185.5" y="120" width="1" height="14" fill="#d6d6d6"/><text x="1073.3" y="129.5" font-family="Liberation Sans" font-weight="bold" font-size="8.5" fill="#333" letter-spacing="-0.3">img</text><circle cx="1101.3" cy="127" r="5.3" fill="#dbe6f6" stroke="#4a6aa0" stroke-width="1.1"/><path d="M1101.3 123.5 v7 M1097.8 127 h7" stroke="#2a60c0" stroke-width="1"/><circle cx="1106" cy="131.8" r="1.7" fill="#f0a040"/><rect x="1112.5" y="122.2" width="9" height="7.5" fill="#fff" stroke="#6a8ab0" stroke-width="1"/><circle cx="1118.5" cy="128.5" r="2.8" fill="#eef4fa" stroke="#8aa0c0" stroke-width="0.9"/><circle cx="1122" cy="132" r="1.7" fill="#f0a040"/><rect x="1133.2" y="120.2" width="15" height="14.4" fill="#d0d0d0"/><path d="M1135.5 125 l3 -3 h8 v9 l-3 3 h-8z M1135.5 125 h8 v9 M1143.5 125 l3 -3" fill="none" stroke="#111" stroke-width="1.1"/><path d="M1135.5 125 l3 -3 h8 l-3 3z" fill="#3a8ef0"/><path d="M1152 125 l3 -3 h8 v9 l-3 3 h-8z M1152 125 h8 v9 M1160 125 l3 -3" fill="#fff" stroke="#555" stroke-width="0.8"/><rect x="1152" y="125" width="8" height="9" fill="#9cc8f8"/><path d="M1168.5 125 l3 -3 h8 v9 l-3 3 h-8z M1168.5 125 h8 v9 M1176.5 125 l3 -3" fill="none" stroke="#555" stroke-width="0.8"/><path d="M1176.5 125 l3 -3 v9 l-3 3z" fill="#8ab8f8"/><path d="M1192 121.5 l2 2 l-2 2 M1195 121.5 l2 2 l-2 2" fill="none" stroke="#555" stroke-width="0.8"/></svg>
<svg class="r" style="left:0px;top:0px;" width="1200" height="280" viewBox="0 0 1200 280"><rect x="946" y="140.3" width="253" height="136.3" fill="#000"/><path d="M1016.4 155.3 H1128.5 V182 H1095 V262 H1050.4 V182 H1016.4Z" fill="none" stroke="#d8a000" stroke-width="1"/><rect x="1056.8" y="160.7" width="31.5" height="95" rx="3" fill="none" stroke="#20c8d8" stroke-width="1"/><rect x="1058.8" y="162.7" width="27.5" height="91" rx="2.5" fill="none" stroke="#20c8d8" stroke-width="1"/><path d="M1073 162 V195.5 H1106" fill="none" stroke="#b01818" stroke-width="1"/><path d="M1070.5 175.5 L1083 163 M1073.5 178.5 L1086 166" stroke="#20c8d8" stroke-width="1.1"/><text x="1077" y="166" font-family="Liberation Sans" font-size="8" fill="#702020">2</text><text x="1104" y="207" font-family="Liberation Sans" font-size="11" fill="#b01818">3</text><circle cx="1059.6" cy="164" r="1.9" fill="#c01818"/><circle cx="1084.7" cy="164" r="1.9" fill="#c01818"/><circle cx="1059.6" cy="171.5" r="1.9" fill="#c01818"/><circle cx="1084.7" cy="171.5" r="1.9" fill="#c01818"/><circle cx="1059.6" cy="208.5" r="1.3" fill="#c01818"/><circle cx="1085.7" cy="208.5" r="1.3" fill="#c01818"/><circle cx="1059.6" cy="253.5" r="1.9" fill="#c01818"/><circle cx="1068.5" cy="253.5" r="1.9" fill="#c01818"/><circle cx="1076.7" cy="253.5" r="1.9" fill="#c01818"/><circle cx="1085" cy="253.5" r="1.9" fill="#c01818"/><text x="956.5" y="209" font-family="Liberation Mono" font-size="9.5" fill="#e8e8e8">B500C</text><circle cx="952" cy="208.5" r="1.6" fill="none" stroke="#c01818" stroke-width="1"/><rect x="950.5" y="264.5" width="51" height="8" fill="#000" stroke="#c8c8c8" stroke-width="0.9"/><rect x="989.3" y="264.5" width="12.2" height="8" fill="#20e020"/><path d="M963.6 264.5 v8" stroke="#c8c8c8" stroke-width="0.9"/><circle cx="957.3" cy="268.6" r="2" fill="#f01010"/><circle cx="976.5" cy="268.6" r="2" fill="#f01010"/><circle cx="995.4" cy="268.6" r="2" fill="#f01010"/><rect x="1023.5" y="140.6" width="94" height="14" fill="#000" stroke="#e8202a" stroke-width="2"/><text x="1030.7" y="151" font-family="Liberation Mono" font-size="9.9" fill="#e8e8f0" stroke="#e8e8f0" stroke-width="0.25">4Φ16+4Φ14+2Φ08</text></svg>
<div class="r" style="left:943.2px;top:276.6px;width:256.8px;height:265.4px;background:#fff;"></div>
<div class="r" style="left:943.2px;top:276.6px;width:15px;height:259px;background:#efefef;"></div>
<div class="r" style="left:943.2px;top:276.6px;width:256.8px;height:4.3px;background:#efefef;"></div>
<svg class="r" style="left:0px;top:0px;" width="1200" height="545" viewBox="0 0 1200 545"><rect x="943.2" y="280.92" width="244.4" height="12.77" fill="#efefef"/><path d="M950.5 289.8 L954.5 285.8 L954.5 289.8Z" fill="#9a9a9a"/><rect x="958.2" y="305.45" width="229.4" height="1" fill="#ececec"/><rect x="1072.6" y="293.69" width="1" height="12.77" fill="#ececec"/><rect x="958.2" y="318.23" width="229.4" height="1" fill="#ececec"/><rect x="1072.6" y="306.46" width="1" height="12.77" fill="#ececec"/><rect x="958.2" y="331.00" width="229.4" height="1" fill="#ececec"/><rect x="1072.6" y="319.23" width="1" height="12.77" fill="#ececec"/><rect x="958.2" y="343.76" width="229.4" height="1" fill="#ececec"/><rect x="1072.6" y="332.00" width="1" height="12.77" fill="#ececec"/><rect x="958.2" y="356.53" width="229.4" height="1" fill="#ececec"/><rect x="1072.6" y="344.76" width="1" height="12.77" fill="#ececec"/><rect x="958.2" y="369.31" width="229.4" height="1" fill="#ececec"/><rect x="1072.6" y="357.54" width="1" height="12.77" fill="#ececec"/><rect x="943.2" y="370.31" width="244.4" height="12.77" fill="#efefef"/><path d="M950.5 379.19 L954.5 375.19 L954.5 379.19Z" fill="#9a9a9a"/><rect x="958.2" y="394.85" width="229.4" height="1" fill="#ececec"/><rect x="1072.6" y="383.08" width="1" height="12.77" fill="#ececec"/><rect x="958.2" y="407.62" width="229.4" height="1" fill="#ececec"/><rect x="1072.6" y="395.85" width="1" height="12.77" fill="#ececec"/><rect x="958.2" y="420.38" width="229.4" height="1" fill="#ececec"/><rect x="1072.6" y="408.62" width="1" height="12.77" fill="#ececec"/><rect x="958.2" y="433.15" width="229.4" height="1" fill="#ececec"/><rect x="1072.6" y="421.38" width="1" height="12.77" fill="#ececec"/><rect x="960.5" y="423.77" width="8" height="8" fill="#fff" stroke="#c8c8c8" stroke-width="1"/><rect x="958.2" y="445.93" width="229.4" height="1" fill="#ececec"/><rect x="1072.6" y="434.16" width="1" height="12.77" fill="#ececec"/><rect x="958.2" y="458.69" width="229.4" height="1" fill="#ececec"/><rect x="1072.6" y="446.93" width="1" height="12.77" fill="#ececec"/><rect x="960.5" y="449.31" width="8" height="8" fill="#fff" stroke="#c8c8c8" stroke-width="1"/><rect x="958.2" y="471.47" width="229.4" height="1" fill="#ececec"/><rect x="1072.6" y="459.70" width="1" height="12.77" fill="#ececec"/><rect x="958.2" y="484.24" width="229.4" height="1" fill="#ececec"/><rect x="1072.6" y="472.47" width="1" height="12.77" fill="#ececec"/><rect x="960.5" y="474.85" width="8" height="8" fill="#fff" stroke="#c8c8c8" stroke-width="1"/><rect x="943.2" y="485.24" width="244.4" height="12.77" fill="#efefef"/><path d="M950.5 494.12 L954.5 490.12 L954.5 494.12Z" fill="#9a9a9a"/><rect x="958.2" y="509.77" width="229.4" height="1" fill="#ececec"/><rect x="1072.6" y="498.00" width="1" height="12.77" fill="#ececec"/><rect x="958.2" y="522.54" width="229.4" height="1" fill="#ececec"/><rect x="1072.6" y="510.77" width="1" height="12.77" fill="#ececec"/><rect x="958.2" y="535.32" width="229.4" height="1" fill="#ececec"/><rect x="1072.6" y="523.55" width="1" height="12.77" fill="#ececec"/></svg>
<div class="t" style="left:960.8px;top:282.6px;font-size:9.2px;color:#333;font-weight:bold;font-family:'Liberation Sans';">Ονοματολογία - Συνδεσμολογία</div>
<div class="t" style="left:960.8px;top:295.7px;font-size:8.8px;color:#3a3a3a;font-weight:normal;font-family:'Liberation Sans';">Όνομα</div>
<div class="t" style="left:1075.8px;top:295.7px;font-size:8.8px;color:#3a3a3a;font-weight:normal;font-family:'Liberation Sans';">Δ15</div>
<div class="t" style="left:960.8px;top:308.5px;font-size:8.8px;color:#3a3a3a;font-weight:normal;font-family:'Liberation Sans';">Είδος</div>
<div class="t" style="left:1075.8px;top:308.5px;font-size:8.8px;color:#3a3a3a;font-weight:normal;font-family:'Liberation Sans';">Δοκός</div>
<div class="t" style="left:960.8px;top:321.3px;font-size:8.8px;color:#3a3a3a;font-weight:normal;font-family:'Liberation Sans';">Κατηγορία Στοιχείου</div>
<div class="t" style="left:1075.8px;top:321.3px;font-size:8.8px;color:#3a3a3a;font-weight:normal;font-family:'Liberation Sans';">Νέο</div>
<div class="t" style="left:960.8px;top:334.0px;font-size:8.8px;color:#a8a8a8;font-weight:normal;font-family:'Liberation Sans';">Είδος Στοιχείου</div>
<div class="t" style="left:1075.8px;top:334.0px;font-size:8.8px;color:#a8a8a8;font-weight:normal;font-family:'Liberation Sans';">Δοκός</div>
<div class="t" style="left:960.8px;top:346.8px;font-size:8.8px;color:#3a3a3a;font-weight:normal;font-family:'Liberation Sans';">Στάθμη</div>
<div class="t" style="left:1075.8px;top:346.8px;font-size:8.8px;color:#3a3a3a;font-weight:normal;font-family:'Liberation Sans';">Σ2</div>
<div class="t" style="left:960.8px;top:359.6px;font-size:8.8px;color:#3a3a3a;font-weight:normal;font-family:'Liberation Sans';">Συνδεσμολογία:</div>
<div class="t" style="left:1075.8px;top:359.6px;font-size:8.8px;color:#3a3a3a;font-weight:normal;font-family:'Liberation Sans';">Κ13-Σ2 ==&gt; Κ29-Σ2</div>
<div class="t" style="left:960.8px;top:372.0px;font-size:9.2px;color:#333;font-weight:bold;font-family:'Liberation Sans';">Διατομή - Διάταξη Όπλισης</div>
<div class="t" style="left:960.8px;top:385.1px;font-size:8.8px;color:#3a3a3a;font-weight:normal;font-family:'Liberation Sans';">Διατομή</div>
<div class="t" style="left:1075.8px;top:385.1px;font-size:8.8px;color:#3a3a3a;font-weight:normal;font-family:'Liberation Sans';">Τ60/25</div>
<div class="t" style="left:960.8px;top:397.9px;font-size:8.8px;color:#3a3a3a;font-weight:normal;font-family:'Liberation Sans';">Διάταξη Όπλισης</div>
<div class="t" style="left:1075.8px;top:397.9px;font-size:8.8px;color:#3a3a3a;font-weight:normal;font-family:'Liberation Sans';">Mb161410</div>
<div class="t" style="left:960.8px;top:410.7px;font-size:8.8px;color:#3a3a3a;font-weight:normal;font-family:'Liberation Sans';">Υλικό</div>
<div class="t" style="left:1075.8px;top:410.7px;font-size:8.8px;color:#3a3a3a;font-weight:normal;font-family:'Liberation Sans';">C25/30</div>
<div class="t" style="left:973.5px;top:423.4px;font-size:8.8px;color:#a8a8a8;font-weight:normal;font-family:'Liberation Sans';">Ορισμός bm</div>
<div class="t" style="left:960.8px;top:436.2px;font-size:8.8px;color:#a8a8a8;font-weight:normal;font-family:'Liberation Sans';">Πλάτος bm=</div>
<div class="t" style="left:1075.8px;top:436.2px;font-size:8.8px;color:#a8a8a8;font-weight:normal;font-family:'Liberation Sans';">62.1 cm</div>
<div class="t" style="left:973.5px;top:449.0px;font-size:8.8px;color:#a8a8a8;font-weight:normal;font-family:'Liberation Sans';">Ορισμός hs</div>
<div class="t" style="left:960.8px;top:461.7px;font-size:8.8px;color:#a8a8a8;font-weight:normal;font-family:'Liberation Sans';">Πάχος hs=</div>
<div class="t" style="left:1075.8px;top:461.7px;font-size:8.8px;color:#a8a8a8;font-weight:normal;font-family:'Liberation Sans';">15 cm</div>
<div class="t" style="left:973.5px;top:474.5px;font-size:8.8px;color:#a8a8a8;font-weight:normal;font-family:'Liberation Sans';">Τροποποίηση Αδρανεια...</div>
<div class="t" style="left:960.8px;top:486.9px;font-size:9.2px;color:#333;font-weight:bold;font-family:'Liberation Sans';">Στερεοί Βραχίονες αρχής σε mm</div>
<div class="t" style="left:960.8px;top:500.0px;font-size:8.8px;color:#a8a8a8;font-weight:normal;font-family:'Liberation Sans';">Rax</div>
<div class="t" style="left:1075.8px;top:500.0px;font-size:8.8px;color:#a8a8a8;font-weight:normal;font-family:'Liberation Sans';">-298</div>
<div class="t" style="left:960.8px;top:512.8px;font-size:8.8px;color:#a8a8a8;font-weight:normal;font-family:'Liberation Sans';">Ray</div>
<div class="t" style="left:1075.8px;top:512.8px;font-size:8.8px;color:#a8a8a8;font-weight:normal;font-family:'Liberation Sans';">-25</div>
<div class="t" style="left:960.8px;top:525.6px;font-size:8.8px;color:#a8a8a8;font-weight:normal;font-family:'Liberation Sans';">Raz</div>
<div class="t" style="left:1075.8px;top:525.6px;font-size:8.8px;color:#a8a8a8;font-weight:normal;font-family:'Liberation Sans';">0</div>
<div class="r" style="left:1187.6px;top:276.6px;width:12.4px;height:265px;background:#fff;"></div>
<div class="r" style="left:1187.8px;top:378.6px;width:12px;height:143.5px;background:#c9c9c9;"></div>
<svg class="r" style="left:0px;top:0px;" width="1200" height="545" viewBox="0 0 1200 545"><rect x="1188" y="281.8" width="11.5" height="11.5" fill="#fff" stroke="#d6d6d6" stroke-width="0.8"/><path d="M1190.5 289.5 h6.5 l-3.25 -3.3z" fill="#606060"/><rect x="1188" y="522.3" width="11.5" height="15.5" fill="#fff" stroke="#d6d6d6" stroke-width="0.8"/><path d="M1190.5 528.5 h6.5 l-3.25 3.3z" fill="#606060"/></svg>
<div class="r" style="left:943.2px;top:541.5px;width:256.8px;height:1.2px;background:#d8d8d8;"></div>
<div class="r" style="left:943.2px;top:542.7px;width:256.8px;height:64.3px;background:#efefef;"></div>
<svg class="r" style="left:0px;top:0px;" width="1200" height="610" viewBox="0 0 1200 610"><rect x="1053.0" y="580" width="1.6" height="1.6" fill="#a8a8a8"/><rect x="1057.5" y="580" width="1.6" height="1.6" fill="#a8a8a8"/><rect x="1062.0" y="580" width="1.6" height="1.6" fill="#a8a8a8"/><rect x="1066.5" y="580" width="1.6" height="1.6" fill="#a8a8a8"/><rect x="1071.0" y="580" width="1.6" height="1.6" fill="#a8a8a8"/><rect x="1075.5" y="580" width="1.6" height="1.6" fill="#a8a8a8"/><rect x="1080.0" y="580" width="1.6" height="1.6" fill="#a8a8a8"/><rect x="1084.5" y="580" width="1.6" height="1.6" fill="#a8a8a8"/><rect x="1089.0" y="580" width="1.6" height="1.6" fill="#a8a8a8"/><rect x="943.2" y="576.5" width="256.8" height="1" fill="#e0e0e0"/><rect x="1059.4" y="584.7" width="17.2" height="20.7" fill="#d0d0d0"/><path d="M1066 589 h4 v11 h2 v2 h-8 v-2 h2 v-8 h-1z" fill="#e8c020"/><circle cx="1068" cy="588" r="1.5" fill="#e8c020"/><path d="M1080 592 l6 -3 l6 3 l-6 3z M1080 595 l6 3 l6 -3 M1080 598 l6 3 l6 -3" fill="none" stroke="#4a6a9a" stroke-width="1"/><rect x="1098.5" y="590" width="10" height="11" fill="#fff" stroke="#333" stroke-width="1"/><rect x="1105" y="588" width="4" height="4" fill="#30a030"/><path d="M1099.5 597 l8 -4" stroke="#777" stroke-width="0.8"/><rect x="1116" y="590" width="10" height="11" fill="#fff" stroke="#333" stroke-width="1"/><circle cx="1121" cy="595.5" r="2.8" fill="none" stroke="#d02020" stroke-width="1.1"/><rect x="1123" y="588" width="4" height="4" fill="#30a030"/><path d="M1134 589 v12 h11" fill="none" stroke="#333" stroke-width="1"/><path d="M1135 590 q3 8 10 9 v2 h-10z" fill="#e0b0d8"/><path d="M1140 592 l4 -3" stroke="#333" stroke-width="0.8"/><path d="M1152 589 v12 h11" fill="none" stroke="#333" stroke-width="1"/><rect x="1154" y="596" width="2.5" height="5" fill="#e03030"/><rect x="1157" y="593" width="2.5" height="8" fill="#30b030"/><rect x="1160" y="598" width="2.5" height="3" fill="#f0a020"/><text x="1170.5" y="595" font-family="Liberation Sans" font-weight="bold" font-size="6.5" fill="#2060b0">CR</text><rect x="1170.5" y="597" width="2" height="4" fill="#20d0f0"/><rect x="1173.3" y="597" width="2" height="4" fill="#60c020"/><rect x="1176.1" y="597" width="2" height="4" fill="#ff7010"/><rect x="1178.9" y="597" width="2" height="4" fill="#d010a0"/><path d="M1191 588 l2 2 l-2 2 M1194 588 l2 2 l-2 2" fill="none" stroke="#555" stroke-width="0.8"/><path d="M1191.5 595 h4 l-2 2z" fill="#555"/></svg>
<div class="r" style="left:0px;top:607.5px;width:1200px;height:18.5px;background:#f0f0f0;"></div>
<div class="r" style="left:0px;top:607.5px;width:1200px;height:1px;background:#dcdcdc;"></div>
<div class="t" style="left:6.0px;top:612.6px;font-size:9px;color:#444;font-weight:normal;font-family:'Liberation Sans';">www.tol.com.gr</div>
<div class="t" style="left:388.9px;top:613.0px;font-size:8.5px;color:#333;font-weight:normal;font-family:'Liberation Sans';">ΕΥΡΩΚΩΔΙΚΕΣ | Ιδιομορφική Ανάλυση Φάσματος Απόκρισης | Κ.Π.Μ. |  q=3.00 | Σχεδιασμού | Τύπος 1</div>
<div class="t" style="left:824.2px;top:613.1px;font-size:8.4px;color:#333;font-weight:normal;font-family:'Liberation Sans';">x=0.871 y=5.673 z=6.600 m</div>
<div class="r" style="left:798.5px;top:610.5px;width:19px;height:14px;background:#d8d8d8;"></div>
<div class="r" style="left:1014.3px;top:610px;width:21.4px;height:15px;background:#d6d6d6;"></div>
<div class="t" style="left:950.6px;top:612.9px;font-size:8.6px;color:#333;font-weight:normal;font-family:'Liberation Sans';">κάναβος</div>
<div class="t" style="left:991.0px;top:612.9px;font-size:8.6px;color:#333;font-weight:normal;font-family:'Liberation Sans';">έλξη</div>
<div class="t" style="left:1017.5px;top:612.9px;font-size:8.6px;color:#333;font-weight:normal;font-family:'Liberation Sans';">dxf</div>
<div class="t" style="left:1038.0px;top:612.9px;font-size:8.6px;color:#333;font-weight:normal;font-family:'Liberation Sans';">έλξη</div>
<div class="t" style="left:1063.0px;top:612.9px;font-size:8.6px;color:#333;font-weight:normal;font-family:'Liberation Sans';">κάθετα</div>
<svg class="r" style="left:0px;top:0px;" width="1200" height="626" viewBox="0 0 1200 626"><rect x="341.5" y="613" width="11" height="8.5" fill="#f4f8fc" stroke="#4a78c0" stroke-width="0.9"/><rect x="341.5" y="613" width="11" height="2.2" fill="#4a78c0"/><path d="M342 617 h10 M342 619.3 h10 M345.2 615 v6 M348.7 615 v6" stroke="#7a9ad0" stroke-width="0.5"/><path d="M354.5 615.5 h3.5 l-1.75 2z" fill="#333"/><rect x="364.5" y="613" width="12.5" height="9" fill="#fff"/><path d="M364.5 613.5 h12.5 M364.5 615.5 h12.5 M364.5 617.5 h12.5 M364.5 619.5 h12.5 M364.5 621.5 h12.5" stroke="#2a5ac8" stroke-width="1"/><rect x="364.5" y="613" width="5" height="5" fill="#2a5ac8"/><path d="M367 613 v5 M364.5 615.5 h5" stroke="#fff" stroke-width="0.9"/><rect x="803" y="616" width="10" height="7" fill="#e8b830" stroke="#a08020" stroke-width="0.6"/><path d="M805 616 v-2.5 a3 3 0 0 1 6 0 v2.5" fill="none" stroke="#808080" stroke-width="1.2"/><path d="M1104.5 617.5 h5.5" stroke="#999" stroke-width="1"/><path d="M1119.3 617.5 h63.7" stroke="#c8c8c8" stroke-width="1"/><rect x="1149.3" y="612" width="3.8" height="11" fill="#f4f4f4" stroke="#999" stroke-width="0.8"/><path d="M1191.5 617.5 h6 M1194.5 614.5 v6" stroke="#999" stroke-width="1"/></svg>
<svg class="r" style="left:0px;top:0px;" width="800" height="90" viewBox="0 0 800 90"><defs>
<linearGradient id="gtri" x1="0" y1="0" x2="1" y2="1"><stop offset="0" stop-color="#8ab4ff"/><stop offset="1" stop-color="#2f74f0"/></linearGradient>
<linearGradient id="gplay" x1="0" y1="0" x2="1" y2="1"><stop offset="0" stop-color="#7aa6f2"/><stop offset="1" stop-color="#4a82e6"/></linearGradient>
<linearGradient id="gc1" x1="0" y1="0" x2="1" y2="0"><stop offset="0" stop-color="#40f0ff"/><stop offset="1" stop-color="#00c8ff"/></linearGradient>
<linearGradient id="gc2" x1="0" y1="0" x2="1" y2="0"><stop offset="0" stop-color="#90e830"/><stop offset="1" stop-color="#3aa800"/></linearGradient>
<linearGradient id="gc3" x1="0" y1="0" x2="1" y2="0"><stop offset="0" stop-color="#ff4a00"/><stop offset="1" stop-color="#ffb820"/></linearGradient>
<linearGradient id="gc4" x1="0" y1="0" x2="1" y2="0"><stop offset="0" stop-color="#d880e0"/><stop offset="0.4" stop-color="#c000b0"/><stop offset="1" stop-color="#ff0020"/></linearGradient>
<pattern id="hatchg" width="3" height="3" patternUnits="userSpaceOnUse"><rect width="3" height="3" fill="#fff"/><path d="M0 3 L3 0" stroke="#999" stroke-width="0.8"/></pattern>
</defs><path d="M18.8 28 L28.8 37 L18.8 46Z" fill="url(#gplay)"/><g transform="translate(64,38.2) rotate(-45)"><rect x="-9.5" y="-5" width="19" height="10.5" rx="2" fill="#5fa89e"/><rect x="-9.5" y="-5" width="9.5" height="9" rx="1.8" fill="#95d8cc"/><rect x="0" y="-5" width="9.5" height="10.5" rx="1.8" fill="#7a5070"/><rect x="0" y="-5" width="9.5" height="9" rx="1.8" fill="#e8b2d8"/></g><rect x="100.8" y="29.8" width="19.6" height="16.7" fill="#c6d6e6" stroke="#7a7a7a" stroke-width="1.3"/><circle cx="110.7" cy="37.7" r="3.8" fill="none" stroke="#a0a8b0" stroke-width="0.8"/><path d="M102.5 45 L115 34" stroke="#a0a8b0" stroke-width="0.8"/><path d="M116 26.3 L122 32.1 L116 37.5Z" fill="url(#gtri)"/><path d="M143.5 27.5 H158 V32 H154 V35 H149 V32 H143.5Z" fill="#f4f4f4" stroke="#4a90f0" stroke-width="1.1"/><rect x="142.6" y="36.3" width="9.6" height="8" fill="url(#hatchg)" stroke="#50a030" stroke-width="1" stroke-dasharray="2 1"/><rect x="156.3" y="33.5" width="5.6" height="10.5" fill="url(#hatchg)" stroke="#d0a050" stroke-width="1"/><path d="M150 37.5 L150 47 L152.3 45 L154 48.5 L155.5 47.8 L153.8 44.4 L157 44.2Z" fill="#c8d0e0" stroke="#7080a0" stroke-width="0.6"/><path d="M158 26.3 L164 32.1 L158 37.5Z" fill="url(#gtri)"/><rect x="191.3" y="37" width="17" height="3.2" fill="#f2e600"/><rect x="198" y="30.7" width="3.3" height="16.3" fill="#f2e600"/><rect x="226.6" y="29.6" width="20.2" height="17.2" fill="#f6f0ec" stroke="#b07458" stroke-width="1.3"/><rect x="232" y="34.3" width="9" height="7.4" fill="url(#hatchg)" stroke="#a06048" stroke-width="1.1"/><path d="M227 30 L232 34.3 M246.4 30 L241 34.3 M227 46.4 L232 41.7 M246.4 46.4 L241 41.7" stroke="#c09080" stroke-width="0.7"/><path d="M242 26 L248 31.8 L242 37.2Z" fill="url(#gtri)"/><path d="M275.5 37 L280.8 28 L280.8 45.7 L270.7 48.5Z" fill="#a8a8a8"/><rect x="269.3" y="28.5" width="11.5" height="1.6" fill="#d8d8d8"/><rect x="267.7" y="31.3" width="11.5" height="1.6" fill="#d8d8d8"/><rect x="266.1" y="34.1" width="11.5" height="1.6" fill="#d8d8d8"/><rect x="264.5" y="36.9" width="11.5" height="1.6" fill="#d8d8d8"/><rect x="262.90000000000003" y="39.7" width="11.5" height="1.6" fill="#d8d8d8"/><rect x="261.3" y="42.5" width="11.5" height="1.6" fill="#d8d8d8"/><rect x="259.7" y="45.3" width="11.5" height="1.6" fill="#d8d8d8"/><path d="M276 26 L282 31.8 L276 37.2Z" fill="url(#gtri)"/><rect x="311.6" y="29.6" width="19.8" height="17" fill="#c8d8e8" stroke="#8a8a8a" stroke-width="1.2"/><rect x="313.8" y="31.8" width="3" height="3" fill="none" stroke="#808890" stroke-width="0.9"/><rect x="318.3" y="31.8" width="3" height="3" fill="none" stroke="#808890" stroke-width="0.9"/><rect x="322.8" y="31.8" width="3" height="3" fill="none" stroke="#808890" stroke-width="0.9"/><rect x="327.3" y="31.8" width="3" height="3" fill="none" stroke="#808890" stroke-width="0.9"/><rect x="313.8" y="36.4" width="3" height="3" fill="none" stroke="#808890" stroke-width="0.9"/><rect x="318.3" y="36.4" width="3" height="3" fill="none" stroke="#808890" stroke-width="0.9"/><rect x="322.8" y="36.4" width="3" height="3" fill="none" stroke="#808890" stroke-width="0.9"/><rect x="327.3" y="36.4" width="3" height="3" fill="none" stroke="#808890" stroke-width="0.9"/><rect x="313.8" y="41.0" width="3" height="3" fill="none" stroke="#808890" stroke-width="0.9"/><rect x="318.3" y="41.0" width="3" height="3" fill="none" stroke="#808890" stroke-width="0.9"/><rect x="322.8" y="41.0" width="3" height="3" fill="none" stroke="#808890" stroke-width="0.9"/><rect x="327.3" y="41.0" width="3" height="3" fill="none" stroke="#808890" stroke-width="0.9"/><path d="M327 26 L333 31.8 L327 37.2Z" fill="url(#gtri)"/><polygon points="402.06,40.84 397.19,45.71 390.31,45.71 385.44,40.84 385.44,33.96 390.31,29.09 397.19,29.09 402.06,33.96" fill="#d8ecf4" stroke="#f06868" stroke-width="1.2"/><rect x="388.3" y="32" width="11" height="11" rx="2" fill="#fff070" stroke="#f0e000" stroke-width="1"/><rect x="390.5" y="34.3" width="6.6" height="6.6" fill="#58b838"/><path d="M399.2 26.2 L405.2 32.0 L399.2 37.4Z" fill="url(#gtri)"/><g transform="translate(460.5,38) rotate(-45)"><rect x="-9.5" y="-5" width="19" height="10.5" rx="2" fill="#5fa89e"/><rect x="-9.5" y="-5" width="9.5" height="9" rx="1.8" fill="#95d8cc"/><rect x="0" y="-5" width="9.5" height="10.5" rx="1.8" fill="#7a5070"/><rect x="0" y="-5" width="9.5" height="9" rx="1.8" fill="#e8b2d8"/></g><text x="550.7" y="36.5" font-family="Liberation Sans" font-weight="bold" font-size="10.3" fill="#1f5aa0">CR</text><rect x="548.5" y="39" width="3.8" height="8" fill="url(#gc1)"/><rect x="553.1" y="39" width="4.1" height="8" fill="url(#gc2)"/><rect x="558.9" y="39" width="4.3" height="8" fill="url(#gc3)"/><rect x="564.2" y="39" width="4.1" height="8" fill="url(#gc4)"/><text x="675.4000000000001" y="36.5" font-family="Liberation Sans" font-weight="bold" font-size="10.3" fill="#1f5aa0">CR</text><rect x="673.2" y="39" width="3.8" height="8" fill="url(#gc1)"/><rect x="677.8000000000001" y="39" width="4.1" height="8" fill="url(#gc2)"/><rect x="683.6" y="39" width="4.3" height="8" fill="url(#gc3)"/><rect x="688.9000000000001" y="39" width="4.1" height="8" fill="url(#gc4)"/><rect x="733" y="26.6" width="18.2" height="21.8" rx="1" fill="#e8f0fa" stroke="#6a8ed0" stroke-width="1.1"/><rect x="733.8" y="27.4" width="16.6" height="6.5" fill="#78a8f0"/><path d="M742 33.5 L750 27.5 L750 33.5Z" fill="#3a70d0"/><rect x="735.2" y="35.0" width="2" height="2.4" fill="#9a9a9a"/><rect x="735.2" y="38.2" width="2" height="2.4" fill="#9a9a9a"/><rect x="735.2" y="41.4" width="2" height="2.4" fill="#9a9a9a"/><rect x="735.2" y="44.6" width="2" height="2.4" fill="#9a9a9a"/><rect x="738.3000000000001" y="35.0" width="2" height="2.4" fill="#9a9a9a"/><rect x="738.3000000000001" y="38.2" width="2" height="2.4" fill="#9a9a9a"/><rect x="738.3000000000001" y="41.4" width="2" height="2.4" fill="#9a9a9a"/><rect x="738.3000000000001" y="44.6" width="2" height="2.4" fill="#9a9a9a"/><rect x="741.4000000000001" y="35.0" width="2" height="2.4" fill="#9a9a9a"/><rect x="741.4000000000001" y="38.2" width="2" height="2.4" fill="#9a9a9a"/><rect x="741.4000000000001" y="41.4" width="2" height="2.4" fill="#9a9a9a"/><rect x="741.4000000000001" y="44.6" width="2" height="2.4" fill="#9a9a9a"/><rect x="744.5" y="35.0" width="2" height="2.4" fill="#e8a040"/><rect x="744.5" y="38.2" width="2" height="2.4" fill="#e07050"/><rect x="744.5" y="41.4" width="2" height="2.4" fill="#e07050"/><rect x="744.5" y="44.6" width="2" height="2.4" fill="#e07050"/><rect x="747.6" y="35.0" width="2" height="2.4" fill="#e8a040"/><rect x="747.6" y="38.2" width="2" height="2.4" fill="#e07050"/><rect x="747.6" y="41.4" width="2" height="2.4" fill="#e07050"/><rect x="747.6" y="44.6" width="2" height="2.4" fill="#e07050"/></svg>
<div class="r" style="left:926.6px;top:89.5px;width:12.4px;height:1.4px;background:#7a9cc8;"></div>
<svg class="r" style="left:0px;top:0px;" width="1200" height="626" viewBox="0 0 1200 626"><rect x="831.3" y="216.8" width="202" height="44.6" fill="none" stroke="#e41e26" stroke-width="2.2"/><path d="M988.7 216.4 L1028.7 194.5 M1013.5 196.5 L1028.7 194.5 L1020.7 205.2" fill="none" stroke="#e41e26" stroke-width="2"/><rect x="499.5" y="452.1" width="421.2" height="64.7" fill="#fff" stroke="#e41e26" stroke-width="2.2"/><rect x="373" y="525" width="48.5" height="51.2" rx="8" fill="none" stroke="#e41e26" stroke-width="3"/><rect x="525.5" y="524.8" width="41.2" height="51.5" rx="8" fill="none" stroke="#e41e26" stroke-width="3"/><path d="M421 526 L499 492" stroke="#e41e26" stroke-width="2"/><path d="M566 525.5 L588 516.5" stroke="#e41e26" stroke-width="2"/></svg>
<div class="t" style="left:835.4px;top:221.9px;font-size:16.2px;color:#e41e26;font-weight:bold;font-family:'Liberation Sans';">ίδια διάταξη όπλισης και</div>
<div class="t" style="left:835.4px;top:243.3px;font-size:16.2px;color:#e41e26;font-weight:bold;font-family:'Liberation Sans';">στα δύο άκρα</div>
<div class="t" style="left:503.7px;top:454.7px;font-size:16.1px;color:#e41e26;font-weight:bold;font-family:'Liberation Sans';">Η μία ακραία περιοχή της δοκού καταλήγει σε ακραιο</div>
<div class="t" style="left:503.7px;top:476.7px;font-size:16.1px;color:#e41e26;font-weight:bold;font-family:'Liberation Sans';">υποστύλωμα, η άλλη σε ενδιάμεσο.Ίδια ροπή αντοχής</div>
<div class="t" style="left:503.7px;top:497.4px;font-size:16.1px;color:#e41e26;font-weight:bold;font-family:'Liberation Sans';">και στις δύο ακραίες περιοχές της δοκού.</div>
</body></html>
